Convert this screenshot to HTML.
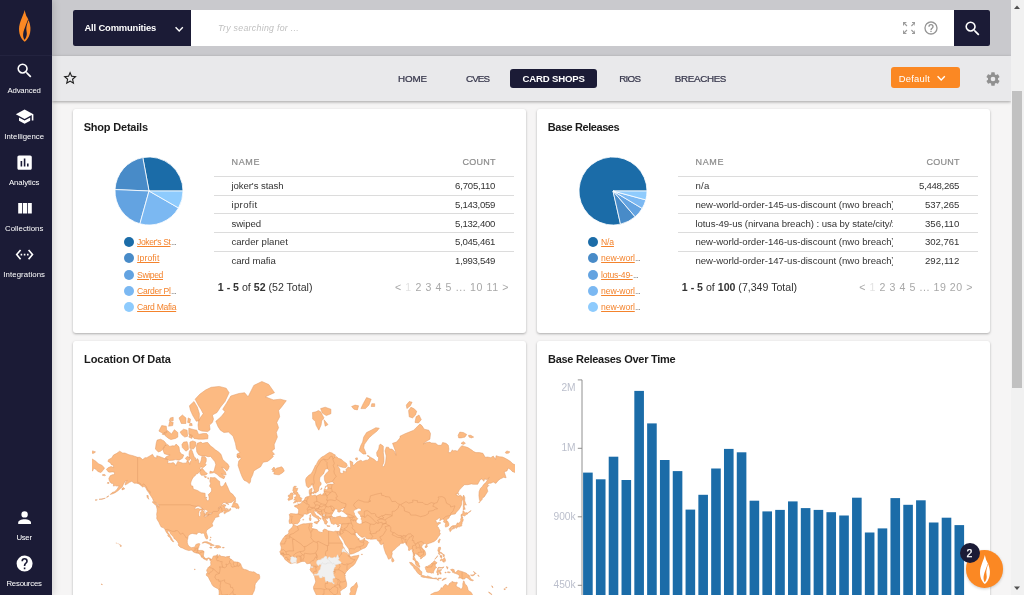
<!DOCTYPE html>
<html>
<head>
<meta charset="utf-8">
<style>
*{box-sizing:border-box;margin:0;padding:0}
html,body{width:1024px;height:595px;overflow:hidden;background:#f6f5f5;font-family:"Liberation Sans",sans-serif;}
.abs{position:absolute}
.t{position:absolute;white-space:nowrap}
#root{position:absolute;left:0;top:0;width:1024px;height:595px;overflow:hidden;will-change:transform;}
#side{position:absolute;left:0;top:0;width:52px;height:595px;background:#1b1b36;box-shadow:2px 0 7px rgba(0,0,0,.13)}
#topbar{position:absolute;left:52px;top:0;width:959px;height:56px;background:#c9c9cd}
#navbar{position:absolute;left:52px;top:55.6px;width:959px;height:45px;background:#e9e9eb;box-shadow:0 1px 3px rgba(0,0,0,.35)}
#search{position:absolute;left:73px;top:10px;width:917px;height:36px;background:#fff;border-radius:2px;overflow:hidden}
.card{position:absolute;background:#fff;border-radius:3px;box-shadow:0 1px 2.5px rgba(0,0,0,.3);width:453px;overflow:hidden}
.hl{position:absolute;height:1px;background:#dcdcdc}
</style>
</head>
<body>
<div id="root">
<div class="card" style="left:73px;top:109px;height:224px"></div>
<div class="card" style="left:537px;top:109px;height:224px"></div>
<div class="card" id="c3" style="left:73px;top:341px;height:300px"><svg class="abs" style="left:11px;top:30px" width="431" height="224" viewBox="84 371 431 224"><defs><clipPath id="mc"><rect x="92" y="371" width="423" height="224"/></clipPath><clipPath id="lc"><path d="M106.4 469.3L108.4 467.6L111.1 466.5L113.6 467.6L113.4 465.3L111.3 464.7L110.5 462.9L107.9 461.4L108.6 459.6L111.7 458.0L113.5 455.0L116.8 453.3L119.7 451.2L122.6 453.0L124.9 453.0L128.9 454.7L133.0 455.7L137.6 457.3L139.9 457.3L142.7 459.6L145.0 457.7L146.8 457.7L150.2 455.7L152.5 454.3L154.2 457.3L156.6 458.0L156.8 455.7L160.0 456.7L164.0 458.3L167.5 459.6L168.1 461.7L167.3 462.9L170.9 463.2L173.2 462.6L175.0 464.1L175.8 465.9L176.7 463.5L177.8 461.4L180.1 462.3L183.0 463.2L186.5 462.9L187.1 460.8L188.8 461.7L189.6 464.4L190.2 462.0L191.7 459.9L189.6 457.7L189.0 454.3L189.4 451.2L191.0 449.1L192.2 450.9L193.0 453.3L194.2 457.0L195.7 458.0L195.7 460.8L197.4 458.6L198.6 460.2L198.8 463.5L200.1 463.2L201.2 460.2L201.8 456.7L204.9 456.7L206.3 458.6L206.2 461.4L205.1 463.5L206.3 464.7L203.7 467.3L202.2 467.6L200.9 466.7L199.9 468.1L200.9 470.3L199.1 471.9L198.0 473.5L196.0 474.0L195.3 475.6L193.4 477.0L192.2 479.0L191.3 481.1L190.7 483.2L191.1 485.8L192.8 486.1L193.4 489.3L195.3 489.7L197.6 490.5L199.4 491.7L201.4 492.7L205.1 493.3L205.2 495.3L205.2 497.6L206.3 499.1L207.2 500.7L208.3 500.7L209.2 499.1L208.9 496.5L208.3 494.5L210.1 493.1L211.6 491.1L211.5 488.6L209.5 486.1L210.6 483.6L209.8 481.3L210.3 477.5L212.9 477.8L214.9 477.5L217.0 479.2L218.7 480.9L219.6 481.3L219.9 485.4L221.6 486.7L223.5 485.8L224.8 483.4L225.6 482.3L226.4 484.5L227.9 487.6L228.9 490.1L230.2 492.5L232.5 494.1L234.0 496.1L235.6 498.0L235.4 499.8L233.7 500.7L231.4 502.5L228.5 502.7L225.6 502.5L223.3 502.7L222.0 504.5L220.4 506.0L218.9 507.7L217.9 508.5L219.3 507.7L221.2 505.7L223.5 504.5L225.8 505.0L225.3 506.3L223.5 506.5L225.0 507.5L225.3 509.3L226.8 510.2L229.1 510.2L230.3 508.2L230.9 509.8L229.4 511.0L226.8 512.1L224.5 513.8L223.7 512.6L225.4 511.0L223.7 511.1L222.5 511.9L220.7 512.6L219.0 513.7L218.5 515.2L219.3 516.3L217.9 516.9L216.1 517.3L214.7 518.2L214.4 519.7L213.5 520.8L212.8 522.3L212.1 523.6L212.6 525.2L212.9 526.0L211.5 526.8L210.1 527.8L208.7 528.7L206.6 530.4L206.2 532.3L207.1 534.9L207.8 537.1L207.4 538.9L206.5 539.1L205.7 538.0L204.7 535.8L204.5 534.3L203.2 533.0L201.6 533.4L199.7 532.5L197.6 532.6L197.0 534.2L195.1 534.0L192.2 533.4L190.5 534.0L188.2 535.8L187.9 538.1L187.3 540.6L187.3 542.7L188.0 544.9L189.2 546.5L190.5 547.2L191.7 547.7L194.0 547.2L195.1 546.7L195.7 544.8L196.3 544.2L198.6 543.6L199.7 543.7L199.9 544.3L199.1 546.0L198.8 547.6L198.2 548.5L198.0 550.3L199.1 550.5L200.9 550.4L202.6 550.5L204.1 551.5L203.7 553.8L203.5 555.5L203.6 556.3L204.3 557.3L205.2 558.3L206.6 558.6L207.9 558.0L208.9 557.8L210.3 558.6L210.9 558.9L210.2 560.4L209.6 559.2L208.3 558.5L207.4 559.3L207.2 560.4L206.0 560.0L204.8 559.3L203.6 559.0L203.2 558.0L202.0 557.5L201.1 556.9L201.2 556.0L199.7 554.4L198.9 553.6L197.4 553.3L195.8 552.9L194.4 552.5L193.5 551.9L191.7 550.2L190.5 550.2L188.8 550.6L187.1 550.1L184.9 549.3L182.4 548.0L180.6 547.4L179.0 546.1L178.2 545.0L178.6 543.7L177.4 541.6L175.5 539.4L173.9 538.4L173.8 537.2L172.1 535.6L170.4 533.7L169.8 531.7L167.7 530.6L167.8 532.3L169.2 534.3L170.4 536.2L171.5 537.9L172.5 540.0L173.8 541.6L173.1 542.0L171.4 540.3L170.7 539.4L170.6 537.9L169.2 537.1L167.7 535.8L168.4 534.9L166.6 532.7L165.5 530.8L165.0 529.6L163.6 527.8L161.2 527.0L159.7 524.2L158.9 522.3L157.4 519.9L156.7 518.5L156.9 516.1L156.6 514.6L157.1 511.4L157.1 509.3L156.3 505.8L158.3 506.2L158.9 507.5L158.6 504.8L157.9 504.1L156.2 502.7L153.7 501.3L152.5 498.5L150.7 495.7L149.6 494.1L148.7 492.5L147.1 490.5L145.6 487.6L143.9 486.3L142.7 487.2L141.0 485.4L138.9 483.9L136.4 483.2L134.1 483.2L131.8 481.3L129.5 482.3L127.8 483.6L125.1 485.0L125.7 482.0L127.2 480.4L125.4 480.9L124.3 482.7L123.2 484.7L122.4 486.7L120.3 488.6L118.0 490.7L115.1 492.7L112.8 493.7L110.2 494.5L112.2 492.5L114.5 491.7L116.8 489.7L118.5 486.9L119.1 485.8L116.8 486.1L115.1 485.6L113.4 486.1L113.4 483.6L111.1 483.2L109.4 480.9L108.8 478.5L110.2 475.8L112.2 474.8L114.5 474.5L114.5 472.2L112.2 471.9L109.5 472.2L108.1 471.7L106.4 469.3ZM223.9 478.7L225.0 476.5L223.3 475.6L221.6 474.0L224.5 474.8L226.2 474.8L225.3 471.9L223.3 469.5L221.8 467.0L224.5 468.4L226.8 471.1L228.5 468.7L229.2 466.5L227.9 464.1L225.6 462.3L222.7 459.3L221.6 456.0L220.8 454.0L218.1 451.6L215.3 449.8L212.9 447.6L210.6 446.1L207.8 442.5L206.0 442.5L202.6 443.3L200.9 442.1L197.2 443.3L196.3 447.2L196.8 451.9L198.6 454.7L200.3 455.4L202.0 456.0L205.5 456.0L208.3 456.7L210.6 456.4L212.9 459.3L214.9 461.7L215.8 464.7L214.9 467.6L214.3 470.3L212.9 471.9L210.1 471.1L209.7 473.3L212.4 473.0L214.1 472.5L217.0 474.3L219.3 476.5L221.6 477.8L223.9 478.7ZM179.0 460.2L182.4 458.3L183.8 455.0L181.3 454.0L179.6 451.6L179.0 446.8L176.1 444.1L174.4 446.1L172.7 445.7L169.8 446.4L167.5 444.5L164.6 445.7L162.9 450.1L164.3 453.7L167.5 454.7L170.1 455.0L165.8 457.0L165.0 459.3L166.9 458.9L169.0 460.5L173.2 460.2L175.5 459.6L179.0 460.2ZM158.3 451.9L155.4 449.1L156.2 443.3L157.1 440.1L160.6 439.2L164.0 440.9L166.6 444.1L164.6 446.4L162.3 449.8L160.6 451.2L158.3 451.9ZM177.8 437.1L175.5 438.4L170.9 439.6L168.6 438.4L165.2 435.7L164.6 432.5L167.5 430.6L171.5 433.9L174.4 429.7L177.8 432.5L177.8 437.1ZM185.9 451.2L182.4 447.6L181.9 444.5L183.6 442.1L187.1 441.7L188.2 445.7L188.4 449.4L185.9 451.2ZM189.8 448.3L189.9 442.1L192.8 440.9L195.7 442.1L195.9 445.7L193.4 449.1L189.8 448.3ZM185.3 458.6L187.1 456.4L189.4 457.3L189.9 459.9L187.6 460.8L185.3 458.6ZM207.8 438.8L208.0 435.3L206.6 433.5L203.2 433.5L198.6 434.4L196.8 430.2L194.0 429.7L188.8 428.2L188.8 434.4L192.8 437.1L194.0 438.4L198.6 439.2L203.2 439.2L207.8 438.8ZM187.6 436.2L184.8 437.1L181.9 434.8L180.1 432.1L183.6 429.2L187.1 430.2L187.6 436.2ZM166.9 432.5L162.9 433.5L158.9 431.1L161.7 425.6L166.3 426.2L166.9 432.5ZM185.9 423.5L181.3 423.5L179.0 417.9L182.4 415.0L185.9 417.9L185.9 423.5ZM207.8 431.6L210.1 429.7L209.5 425.1L212.4 422.4L213.5 419.1L212.4 415.0L217.0 412.5L220.4 407.2L225.0 401.5L229.1 392.7L226.2 388.2L219.3 386.4L211.2 387.3L205.5 390.0L199.7 394.3L195.1 399.2L198.6 405.8L200.9 409.2L203.2 413.7L200.9 416.8L198.6 420.8L198.0 425.1L198.6 429.7L202.0 431.1L207.8 431.6ZM199.1 420.8L196.3 421.3L192.8 415.6L190.5 410.5L189.4 405.8L194.0 401.5L197.4 407.2L199.4 413.7L199.1 420.8ZM199.7 473.0L201.4 475.3L204.3 475.3L206.6 474.5L207.4 473.5L205.7 472.5L203.7 470.1L202.0 468.1L200.9 469.5L199.7 473.0ZM231.6 507.0L232.3 505.7L233.1 503.4L234.2 501.3L235.6 500.2L235.6 501.8L234.7 503.1L236.0 503.2L237.7 503.9L238.3 505.5L239.2 507.2L238.6 508.8L237.7 508.2L236.0 508.4L235.4 507.2L231.6 507.0ZM157.8 505.8L155.4 505.0L152.2 502.0L153.1 501.5L155.6 502.7L157.5 504.6L157.8 505.8ZM148.8 499.3L147.3 497.6L146.8 495.5L148.1 495.5L148.3 497.6L148.8 499.3ZM124.7 488.9L122.0 489.9L122.0 488.2L123.7 487.6L124.7 488.9ZM102.1 475.0L104.2 475.8L105.6 475.3L104.2 474.3L102.1 475.0ZM107.2 483.2L108.8 483.6L109.1 482.5L107.6 482.5ZM225.6 503.2L228.5 504.6L228.8 504.1L226.8 503.2ZM225.7 508.7L227.3 509.7L228.5 509.2L226.4 508.4ZM249.3 483.6L246.9 481.6L244.0 480.2L242.3 477.3L240.6 473.0L239.4 469.5L238.0 465.3L238.8 460.8L241.1 458.6L240.0 457.3L237.0 457.0L237.0 454.0L240.0 452.6L236.5 449.1L235.4 443.3L233.1 436.2L228.5 432.1L223.9 432.5L220.4 430.2L218.1 426.7L215.8 421.3L221.0 416.8L225.0 411.8L222.7 409.2L226.2 403.7L230.8 396.0L238.8 393.5L244.6 392.7L248.1 396.8L253.8 385.4L261.9 381.5L268.8 384.5L274.5 392.7L265.3 396.8L273.4 399.9L280.3 399.2L286.3 400.7L281.4 407.2L278.6 410.5L279.7 416.8L276.8 422.4L278.6 427.7L276.3 432.5L277.4 437.1L275.9 440.5L274.2 444.5L274.5 449.1L271.7 450.9L274.5 454.3L272.2 455.4L273.4 456.4L270.5 459.3L267.6 461.4L263.0 462.3L260.7 466.7L257.3 468.7L253.8 470.9L252.7 474.8L250.9 478.5L250.4 482.0L249.3 483.6ZM271.7 469.5L274.0 467.0L275.3 469.3L276.8 468.1L279.1 467.6L281.4 466.7L283.0 468.1L284.3 470.9L282.6 472.7L279.1 474.8L276.3 474.5L273.7 474.0L274.5 472.2L272.2 471.1L274.3 470.1L271.7 469.5ZM210.9 558.9L211.5 559.6L212.7 557.8L212.9 556.6L213.8 556.0L215.8 555.7L217.6 554.5L217.9 555.2L217.1 555.9L217.6 556.3L218.1 557.8L217.2 558.1L217.6 556.5L219.0 555.7L219.3 554.7L219.9 555.5L221.2 556.3L223.9 556.6L225.6 557.0L227.3 556.5L228.5 556.5L227.8 557.3L229.6 557.8L230.2 559.0L231.9 559.6L233.1 560.9L234.2 561.8L236.5 562.0L237.7 562.1L239.4 562.8L240.6 563.7L241.6 566.4L242.3 567.5L242.1 568.6L243.8 569.0L244.6 569.4L246.3 569.8L248.5 570.7L248.9 571.6L250.4 571.4L252.1 571.9L253.8 571.8L255.5 572.8L257.0 574.1L259.2 574.5L259.8 576.8L259.6 578.7L257.8 580.6L256.9 581.8L255.5 583.5L255.0 585.3L255.0 587.6L254.6 589.4L254.0 591.4L253.2 592.7L252.7 594.2L251.5 595.4L248.6 595.7L246.3 596.9L244.0 598.9L243.9 601.7L218.4 601.7L218.7 597.9L218.9 595.4L219.2 593.0L218.9 589.9L217.6 588.6L215.3 587.4L213.3 586.2L212.0 584.6L211.0 582.3L209.7 580.0L208.6 577.7L207.8 576.4L206.4 575.5L206.3 574.0L207.4 572.5L207.9 571.5L206.7 571.3L206.8 569.8L207.7 568.6L207.8 567.7L209.0 567.2L209.2 566.6L210.6 565.7L210.9 564.3L210.6 562.4L210.9 561.2L210.2 560.4L210.9 558.9ZM202.1 543.2L203.2 542.1L204.9 541.7L207.2 541.7L208.9 542.6L210.6 543.3L212.7 544.6L214.4 545.3L213.5 545.6L210.4 545.8L211.0 544.8L209.5 544.3L207.8 543.5L206.0 542.8L204.9 542.4L203.2 543.1L202.1 543.2ZM214.2 547.4L216.2 547.2L216.1 546.4L215.4 545.8L217.0 545.6L219.3 545.8L221.1 547.2L219.9 547.6L218.1 547.9L217.4 548.3L216.4 547.8L214.2 547.4ZM209.7 547.4L211.2 547.3L212.1 547.9L211.0 548.2L209.7 547.7ZM222.5 547.4L224.2 547.4L224.1 547.9L222.5 547.9ZM228.7 556.5L229.6 556.3L229.6 557.1L228.7 557.1ZM209.7 539.8L210.4 539.3L210.5 540.3L209.8 540.4ZM210.6 537.1L211.2 537.5L211.0 537.9L210.2 537.4ZM293.1 525.2L293.7 525.0L296.4 525.9L297.5 526.1L299.2 525.3L301.6 524.3L303.3 523.8L305.6 523.8L307.9 523.5L310.2 523.2L311.2 523.1L312.5 523.5L311.9 524.9L312.4 526.3L311.4 527.7L312.5 528.6L315.0 529.1L317.3 529.8L318.3 531.4L320.6 532.2L322.1 532.6L322.9 531.7L322.9 530.2L324.6 529.1L326.3 529.6L327.5 530.4L328.6 530.9L330.9 531.3L333.2 531.8L334.4 531.4L335.5 531.0L337.0 531.4L337.3 533.0L337.5 534.3L338.5 536.0L339.2 537.9L340.1 539.6L340.9 540.8L342.2 543.0L342.7 544.3L342.7 546.0L344.2 547.9L345.0 549.9L345.7 551.1L347.0 552.0L348.8 553.8L349.7 554.4L349.6 555.5L350.5 556.7L351.6 556.8L353.9 556.0L356.2 555.8L358.9 555.2L358.6 556.8L357.4 559.0L356.2 561.3L355.1 563.5L353.4 565.5L352.0 566.4L349.9 568.1L348.2 569.8L347.0 570.9L346.1 572.0L345.5 573.2L344.7 574.9L345.1 576.4L345.3 578.3L345.9 580.4L346.6 582.9L346.7 585.3L346.2 587.0L344.7 588.2L342.4 589.4L340.0 591.5L340.4 593.6L340.7 596.0L337.8 598.5L337.8 601.7L317.1 601.7L316.9 597.9L316.5 595.3L315.4 593.0L313.7 589.4L313.4 587.0L313.8 586.1L315.3 583.0L315.7 581.2L315.0 578.7L314.6 576.6L313.9 575.5L313.7 574.3L313.4 574.1L312.5 572.8L311.0 571.5L310.2 569.8L309.9 569.4L310.7 568.2L310.9 567.0L311.1 565.8L311.0 564.7L310.8 564.1L310.0 563.5L309.4 563.4L307.9 563.7L306.8 563.8L305.8 562.4L304.9 561.5L303.8 561.4L302.2 561.5L301.2 561.7L299.9 562.3L297.5 563.2L295.8 562.9L295.2 562.6L292.9 563.1L291.2 563.7L289.5 563.0L287.4 561.5L286.6 560.8L285.5 560.1L284.7 559.0L284.3 557.8L282.9 556.5L282.6 555.9L281.9 555.1L280.6 554.4L280.5 553.3L279.7 551.8L280.9 550.3L281.3 547.8L280.9 546.1L280.3 544.3L280.4 543.1L281.4 541.0L282.7 539.0L283.2 538.0L284.3 537.0L285.0 535.7L287.2 534.6L288.3 533.7L288.8 532.5L288.6 531.0L289.3 530.0L291.1 528.2L292.0 527.7L292.7 526.3L293.1 525.2ZM356.6 582.3L357.7 586.4L356.8 588.8L356.2 591.2L355.1 594.8L353.9 597.9L351.6 598.5L350.1 596.0L349.7 593.6L350.8 591.8L350.5 588.8L351.6 587.0L353.9 585.8L355.1 584.1L356.6 582.3ZM289.5 523.5L289.0 521.0L289.7 518.4L289.7 516.1L289.1 514.6L290.6 513.5L293.5 513.8L295.8 514.0L297.8 514.0L298.5 512.2L298.6 510.6L298.5 509.5L297.5 508.2L296.6 507.4L294.7 506.7L294.4 505.8L296.4 505.1L298.0 505.5L297.8 503.6L298.5 504.1L300.0 503.9L301.6 502.9L301.9 501.5L303.5 500.7L304.5 499.5L305.3 497.6L306.8 496.8L307.9 496.5L309.6 496.1L309.9 495.1L309.4 493.9L309.2 492.7L309.2 490.7L309.7 489.5L312.1 488.2L311.8 490.7L311.4 492.7L310.9 493.9L311.4 494.9L312.5 495.7L313.9 495.3L315.4 494.9L316.3 495.9L318.3 495.1L320.6 494.1L321.5 494.9L322.6 494.9L322.9 493.9L324.0 492.7L324.0 490.1L324.7 488.4L326.3 489.7L327.7 489.3L327.9 486.9L326.9 485.8L326.9 485.0L328.4 484.3L330.4 484.1L332.1 484.3L334.6 483.4L333.2 482.7L332.7 481.8L330.9 482.0L328.6 482.7L326.3 483.4L325.2 482.0L324.4 479.7L324.3 476.1L325.7 474.0L328.0 471.4L329.1 470.9L327.7 468.7L325.4 469.0L324.4 471.7L323.4 474.0L321.1 476.1L319.8 477.8L319.6 480.9L319.8 481.8L321.1 482.7L321.1 484.7L319.4 486.3L318.8 488.6L318.5 490.7L318.0 491.5L316.5 491.7L316.2 492.9L314.8 492.9L314.5 491.3L313.7 488.6L313.5 488.2L312.7 485.4L312.2 483.4L311.7 485.0L310.4 486.1L309.1 487.4L307.9 487.6L306.4 485.8L305.8 482.3L305.6 479.7L306.2 478.0L307.3 476.8L309.1 475.0L311.0 474.0L312.5 471.4L314.2 468.1L315.4 465.3L316.4 464.4L317.7 461.7L318.8 459.9L321.7 457.0L324.0 456.0L326.3 454.3L329.5 452.3L332.1 453.0L333.8 454.3L335.5 455.0L334.4 456.7L336.7 456.7L338.4 458.3L341.3 459.3L343.6 461.4L346.5 463.5L347.3 465.9L345.9 467.6L343.6 467.6L340.1 466.7L337.3 465.0L338.4 466.7L339.9 469.5L339.9 472.5L341.9 473.5L343.6 472.7L343.0 470.9L346.5 471.9L345.9 469.5L348.2 467.0L350.7 468.1L350.5 465.3L349.9 460.8L352.8 462.3L352.8 465.3L353.9 465.3L355.7 463.2L357.4 461.7L360.9 460.2L362.6 461.4L366.0 460.2L367.8 460.2L369.5 458.3L369.5 456.7L374.1 459.3L376.4 461.4L378.1 461.4L378.7 457.7L377.0 456.0L376.6 452.6L378.7 449.1L379.3 445.3L380.4 444.1L383.3 446.1L383.3 452.6L383.9 457.7L383.9 462.3L382.1 466.2L383.9 466.7L385.6 462.3L386.2 456.0L385.0 450.9L386.2 447.2L388.5 447.2L389.6 449.1L391.9 449.1L394.2 450.9L396.0 455.4L395.4 450.9L392.5 443.3L396.5 442.1L400.0 437.9L400.0 436.2L404.6 433.9L409.2 432.1L413.8 430.2L416.1 427.7L419.9 424.1L421.9 425.6L424.2 429.2L428.8 430.2L430.5 433.5L429.9 439.2L426.5 441.3L423.0 444.1L426.5 442.5L429.9 442.1L431.1 442.9L435.7 443.3L438.0 445.3L441.4 445.3L442.6 442.5L446.0 443.3L448.3 445.3L448.9 449.1L448.3 452.6L450.6 452.6L452.4 449.8L452.9 450.9L455.2 450.5L457.5 451.2L459.8 447.9L461.8 445.7L464.4 446.4L467.9 447.6L472.5 450.5L473.7 451.6L476.0 452.6L479.4 452.6L482.9 453.3L485.2 457.3L487.5 457.0L490.9 457.7L493.2 456.0L495.5 459.3L496.1 455.7L499.0 456.7L502.4 457.0L504.7 458.0L507.0 459.3L510.5 461.4L512.8 463.8L516.2 465.3L518.9 467.9L518.0 469.5L515.7 472.2L514.9 472.5L512.2 471.4L510.5 469.5L508.2 468.1L507.0 470.9L504.2 471.7L506.1 477.8L503.6 477.3L500.1 479.0L497.8 480.9L495.9 483.4L493.2 482.0L490.9 483.2L489.8 483.2L488.0 483.6L487.5 486.5L486.9 488.0L487.8 491.3L486.3 493.7L484.0 497.2L482.5 497.6L482.1 499.5L480.2 501.5L479.4 499.5L478.9 495.7L479.1 491.7L480.3 488.6L482.3 486.5L483.8 484.3L486.1 482.3L488.0 479.0L489.2 477.5L486.9 479.5L484.4 479.0L484.0 481.3L481.7 479.0L480.2 479.7L478.3 483.2L477.7 484.3L473.4 484.3L471.3 483.9L467.9 484.7L464.4 484.7L461.6 487.6L459.3 490.1L457.5 493.7L455.8 494.3L458.1 496.1L460.4 495.3L462.5 497.0L462.1 497.6L462.6 499.1L461.8 501.3L461.5 504.8L459.8 508.2L458.7 509.8L456.4 512.2L455.2 514.0L451.8 514.4L450.6 515.2L450.3 515.7L449.2 516.9L449.1 517.9L447.2 519.1L446.6 519.9L446.6 520.3L447.6 521.3L448.8 523.5L448.9 524.9L448.4 526.1L447.2 526.6L445.5 527.1L445.2 525.6L445.6 523.5L445.6 522.8L444.3 522.5L443.5 521.9L444.1 519.9L443.0 519.1L441.4 519.7L439.7 520.8L440.3 518.4L439.1 517.8L437.5 519.3L435.4 520.6L436.6 522.1L436.8 523.2L438.9 522.3L440.8 522.9L439.1 524.0L438.3 524.7L437.0 526.3L438.3 527.2L439.0 529.0L440.0 530.6L440.0 531.4L439.1 532.2L440.3 533.0L439.8 534.9L438.5 536.6L437.5 538.1L436.6 539.4L435.8 540.0L434.5 541.3L434.2 541.5L432.2 542.2L431.3 542.7L429.9 543.1L428.2 543.7L427.0 544.1L426.8 545.2L426.2 544.3L425.3 543.6L424.7 543.6L424.2 543.7L422.8 544.6L421.9 546.1L421.6 547.0L422.4 548.2L423.6 549.5L424.5 550.3L425.3 552.0L425.7 553.8L425.5 555.2L424.2 556.3L423.0 556.8L422.4 557.7L421.1 558.8L420.5 558.9L420.7 557.3L420.1 556.8L419.0 556.6L418.4 555.8L417.6 554.7L416.1 554.1L415.5 553.2L415.0 553.8L415.0 555.0L414.4 556.1L414.0 556.7L414.7 558.1L415.3 559.0L415.5 560.5L416.7 560.9L417.5 561.6L418.9 563.5L418.9 564.7L419.6 565.8L419.9 567.1L419.3 567.2L418.7 566.8L417.5 566.2L416.4 565.3L415.6 563.9L415.3 562.5L415.2 561.4L414.6 560.7L413.8 559.9L413.0 559.7L413.0 558.4L413.2 557.3L413.3 555.5L413.3 554.4L412.9 552.6L412.3 550.9L412.2 549.7L411.3 549.1L410.6 549.6L409.5 550.5L408.4 550.3L408.6 548.5L408.3 547.0L407.5 545.8L406.8 545.4L406.1 544.3L405.5 542.7L404.6 542.5L404.0 543.1L402.9 543.3L401.7 543.5L401.1 543.3L400.0 543.7L399.8 544.9L398.6 545.8L397.7 546.5L396.5 547.6L395.7 548.3L394.6 549.6L393.3 550.4L392.3 550.9L392.0 552.6L392.3 553.7L391.8 555.2L391.7 556.9L391.0 558.1L389.9 558.5L389.1 559.4L388.4 559.0L387.6 557.3L387.1 555.8L385.9 553.9L384.8 550.9L384.2 549.1L383.6 546.7L383.5 544.9L383.6 544.3L383.4 542.8L382.8 544.1L381.6 544.7L380.4 544.3L380.0 543.6L379.3 542.7L380.8 542.0L379.3 542.1L378.7 541.5L378.3 541.0L377.4 540.6L377.0 539.6L376.4 538.9L374.1 539.1L371.6 539.3L370.6 539.3L369.6 539.0L367.8 538.9L366.4 538.5L365.5 537.1L364.7 536.6L363.2 537.2L362.0 537.4L360.3 536.2L358.3 534.4L357.6 533.0L356.2 532.5L355.8 533.1L355.1 533.8L355.7 534.9L356.2 536.2L357.4 537.2L357.6 538.6L358.3 539.6L358.3 538.8L358.8 538.0L359.2 539.0L359.0 539.9L360.3 540.4L362.5 540.0L363.5 539.0L364.4 538.0L364.8 537.8L364.8 539.4L365.2 540.4L367.3 541.1L368.7 542.5L367.8 543.8L367.2 545.0L366.4 546.7L364.9 547.9L363.5 548.4L362.0 549.1L359.9 550.3L358.6 551.2L356.2 552.2L354.5 553.1L351.6 554.0L349.9 554.1L349.6 553.2L349.2 551.5L348.9 549.7L348.8 549.2L347.3 547.0L345.9 545.2L344.9 543.7L344.2 541.9L343.6 540.5L342.4 538.8L341.9 537.9L340.7 536.2L339.9 535.5L340.1 533.7L339.3 535.8L338.4 535.1L337.4 533.1L337.0 531.3L339.2 531.3L339.9 530.2L340.1 529.3L340.7 527.8L341.1 525.6L341.5 524.0L340.7 524.0L339.7 523.8L338.4 524.7L337.6 524.9L335.2 523.6L333.8 524.6L332.4 523.8L331.4 523.5L330.7 521.5L330.1 520.2L330.0 519.1L331.5 518.5L333.2 518.5L334.3 518.1L333.2 517.6L333.3 517.3L335.8 517.5L336.5 516.9L340.4 516.1L341.6 517.2L345.5 517.6L347.7 516.7L347.8 515.8L347.0 514.6L345.5 513.7L343.4 511.9L342.0 511.1L342.8 511.0L343.6 509.8L343.9 508.7L345.1 507.9L343.6 508.0L343.0 508.0L342.2 508.7L340.5 509.3L340.1 510.3L341.9 510.8L340.6 511.4L339.2 512.2L338.3 512.1L337.3 511.0L338.5 509.8L337.3 509.7L336.1 508.8L335.2 509.0L334.0 511.0L332.9 512.7L332.0 514.3L331.5 515.4L332.1 516.3L333.2 517.2L333.1 517.6L331.5 517.6L330.6 518.5L330.0 519.0L329.8 518.2L329.7 517.9L327.9 517.8L327.5 519.1L326.9 518.8L326.2 518.2L325.9 519.1L326.3 520.2L327.5 521.8L327.1 522.2L327.5 522.5L326.6 522.9L326.6 524.2L325.7 524.2L324.8 523.8L324.4 522.5L324.8 521.8L324.0 521.6L323.7 520.8L322.9 519.6L322.2 518.5L322.2 517.2L321.9 516.3L321.1 515.5L320.7 515.2L318.7 513.8L317.3 512.9L316.4 511.0L315.5 511.6L315.7 510.5L314.0 510.8L314.2 511.6L314.4 512.9L315.4 513.7L316.2 515.4L318.5 516.3L319.3 517.5L320.6 518.2L321.1 519.0L321.0 519.4L319.6 518.4L319.0 519.0L318.8 519.6L319.5 520.5L319.0 520.9L318.4 522.2L317.8 521.9L318.0 521.0L318.4 520.6L317.8 519.1L316.9 518.1L316.2 517.9L315.4 517.3L313.9 516.6L312.5 515.5L311.9 514.6L311.7 513.8L311.1 512.9L310.1 512.4L309.3 513.0L308.3 513.5L306.8 514.4L306.1 514.1L305.1 514.0L303.9 514.1L303.3 515.4L303.6 515.7L302.4 517.0L301.2 517.5L300.8 518.1L299.5 519.9L300.1 521.0L299.3 521.6L298.8 522.6L297.3 523.9L297.0 523.8L294.8 523.9L293.6 524.7L293.4 524.9L292.6 524.2L291.8 523.2L290.6 523.5L289.5 523.5ZM293.3 502.9L294.1 502.3L294.7 501.3L296.4 500.7L296.4 500.4L295.0 500.2L293.7 499.8L295.0 498.7L294.7 497.8L294.6 497.0L296.2 496.8L296.4 495.7L295.8 494.7L296.1 493.9L294.3 494.3L294.0 493.9L294.3 492.7L294.3 491.9L293.3 493.1L293.4 491.3L292.7 490.3L293.2 489.1L293.2 487.8L294.1 486.3L296.4 486.3L295.2 487.8L295.0 488.6L296.1 488.2L297.5 488.2L297.8 488.6L297.4 489.5L297.0 490.7L296.2 491.7L297.5 492.1L298.2 493.7L299.3 494.9L299.7 495.5L299.7 496.5L300.2 497.4L300.1 497.8L301.3 497.8L301.9 498.5L301.3 499.6L300.7 500.4L301.5 500.6L301.5 501.1L301.0 501.5L300.1 501.8L298.6 501.6L297.5 502.0L297.1 502.2L296.4 501.8L295.8 502.3L295.7 502.7L295.1 502.5L293.9 503.1L293.3 502.9ZM292.5 499.1L292.8 497.0L292.7 495.7L293.4 494.5L292.9 493.3L291.3 492.9L290.3 493.5L290.1 494.7L288.3 495.3L288.3 496.6L289.5 497.2L288.5 498.3L287.9 499.3L288.1 499.8L288.6 500.6L290.3 499.8L291.8 499.3L292.5 499.1ZM318.8 430.2L316.0 425.1L315.4 421.3L312.7 419.1L312.5 412.5L316.0 411.8L318.3 410.5L320.6 411.8L324.0 417.9L321.7 420.8L321.1 425.1L318.8 430.2ZM320.6 408.6L325.2 407.2L330.9 409.2L330.9 413.7L326.3 415.6L322.3 413.1L320.6 408.6ZM324.0 419.7L328.0 424.6L325.2 426.2L324.0 419.7ZM351.6 406.5L355.1 405.1L358.6 405.8L357.4 409.9L353.9 409.2ZM360.9 408.6L365.5 408.6L368.9 405.1L371.2 399.2L366.6 397.6L363.2 403.7ZM371.2 406.5L374.7 406.5L374.7 403.7L371.8 403.7ZM359.1 450.5L360.9 445.3L362.6 442.1L363.7 437.1L366.6 432.5L371.2 430.2L375.8 427.7L379.3 428.2L377.0 431.1L372.4 434.8L368.9 437.9L366.0 442.1L364.3 444.5L363.7 447.9L365.5 451.9L366.0 454.0L363.2 454.0L361.4 452.6L359.1 450.5ZM355.4 458.3L357.2 457.7L357.7 459.3L356.2 460.2ZM367.2 455.4L369.3 456.0L368.3 457.0ZM409.2 416.8L412.6 417.9L415.5 415.0L416.7 411.2L413.8 408.6L410.9 407.2L408.6 410.5L409.2 416.8ZM415.0 422.4L418.4 423.0L421.3 419.7L419.0 415.0L416.1 416.8L415.0 422.4ZM406.9 408.6L410.3 405.8L412.1 402.2L409.2 401.5L406.3 405.1ZM458.1 435.3L459.8 432.1L463.3 432.5L466.7 434.4L465.0 437.1L461.0 437.9L458.7 437.9ZM468.5 435.3L470.8 435.3L473.7 437.1L471.3 437.9L469.0 437.1ZM461.0 443.3L463.3 441.7L465.4 443.3L463.3 444.5ZM505.3 452.3L507.0 450.9L509.9 451.9L508.2 453.3L505.9 453.3ZM463.6 495.1L464.8 497.6L464.7 500.4L465.4 503.1L466.4 505.1L464.4 504.5L464.2 506.5L465.0 508.5L464.9 509.7L463.9 508.7L463.3 510.0L463.3 507.4L463.3 504.8L463.4 502.2L463.1 500.0L462.9 497.0L463.6 495.1ZM461.1 517.0L461.3 515.7L460.8 515.2L461.6 514.1L462.5 514.3L462.9 512.2L462.9 510.8L463.3 510.6L464.4 512.2L465.9 513.0L467.1 512.6L467.7 514.0L466.1 514.6L464.7 516.1L462.8 515.2L462.1 515.7L461.5 515.4L461.8 516.1L462.4 516.4L461.8 516.6L461.1 517.0ZM462.0 516.9L462.7 517.0L462.7 518.4L463.3 519.7L462.8 521.6L462.1 521.8L462.1 523.5L461.7 524.5L461.9 525.3L461.0 526.4L460.8 525.6L460.6 526.1L459.7 526.8L458.9 526.8L457.5 526.8L457.3 526.3L457.4 527.2L456.2 528.5L455.4 527.4L455.6 526.8L454.1 526.8L452.2 527.2L450.6 527.7L450.6 527.1L452.6 525.7L454.3 525.6L456.2 525.4L456.4 524.6L457.2 523.1L457.9 522.8L457.8 523.8L459.8 522.2L460.8 520.9L460.6 519.3L461.0 518.2L461.3 517.3L461.9 517.8L462.0 516.9ZM451.8 528.6L452.6 527.8L454.1 527.2L454.8 527.4L454.3 528.7L453.5 528.3L452.9 529.4L452.4 528.7L451.8 528.6ZM450.5 527.8L451.4 528.7L451.8 529.3L451.2 530.5L450.3 531.7L449.8 531.3L449.7 530.1L449.2 529.6L449.1 528.7L449.9 528.2L450.5 527.8ZM439.7 539.0L440.3 539.4L439.8 540.6L439.0 543.1L438.2 542.1L438.1 541.0L439.1 539.4L439.7 539.0ZM425.0 546.4L426.0 545.5L427.0 545.4L427.6 546.0L427.0 547.0L426.0 547.7L425.0 547.3L425.0 546.4ZM392.2 557.5L393.3 559.0L394.0 560.4L393.8 561.3L392.6 561.9L391.9 561.6L391.7 560.7L391.7 559.3L392.0 558.0L392.2 557.5ZM438.7 547.3L440.5 547.3L440.6 549.1L439.8 550.3L439.8 551.7L440.6 552.6L441.8 552.7L442.6 553.8L442.7 554.3L441.8 553.8L441.0 553.4L439.9 552.7L439.1 553.0L438.7 552.4L439.0 551.9L438.3 551.7L437.9 550.5L437.7 549.9L438.3 550.2L438.3 548.5L438.7 547.3ZM444.3 557.5L445.2 559.0L445.6 560.4L445.1 561.5L444.4 560.7L444.2 562.3L442.8 561.7L442.6 560.7L441.9 560.2L440.3 560.8L440.4 559.8L441.2 559.2L441.8 558.9L442.3 559.4L442.8 559.3L443.3 559.0L443.7 558.4L444.3 557.5ZM442.9 554.4L444.1 554.4L444.5 555.9L443.7 557.0L443.4 556.2L443.0 555.5ZM440.7 556.7L441.7 556.1L442.0 556.7L441.5 558.3L440.8 557.5ZM440.2 555.2L441.5 555.5L441.1 556.6L440.2 556.7ZM438.3 553.3L439.4 553.3L439.7 554.4L439.2 554.7L438.8 554.0ZM434.7 559.1L435.7 558.2L436.8 556.9L437.5 555.7L437.2 556.8L436.1 558.2L435.2 559.0ZM426.0 566.3L427.0 566.7L428.0 565.9L429.9 565.0L431.1 563.7L432.2 563.0L433.4 561.8L434.3 560.7L435.3 561.4L435.8 562.0L437.0 562.6L436.4 563.7L435.6 563.9L435.2 564.9L435.4 566.4L436.8 567.5L435.6 567.7L434.9 569.2L434.3 570.1L433.7 571.5L433.4 572.7L433.4 573.2L431.8 572.6L431.6 573.3L429.9 572.4L428.5 572.6L426.7 572.0L426.5 570.8L425.7 569.4L425.5 568.6L425.2 567.5L426.0 566.3ZM409.5 562.3L412.1 562.8L413.0 563.8L413.5 564.3L415.3 565.8L416.7 566.7L418.2 567.7L419.3 568.6L419.0 569.8L420.0 569.8L420.5 570.9L421.9 571.8L421.9 572.4L421.7 573.8L421.6 575.2L421.1 575.3L420.1 574.9L418.4 573.8L417.6 573.0L415.4 569.8L413.8 568.3L413.6 566.7L412.1 565.8L410.9 564.5L410.5 564.0L409.5 562.3ZM420.9 576.4L421.9 575.3L422.8 575.6L424.5 575.8L424.8 576.3L426.9 576.5L427.6 575.9L429.6 576.8L431.5 577.4L431.5 578.0L431.6 578.5L429.6 578.2L427.6 578.0L425.3 577.4L423.8 577.4L422.3 577.1L420.9 576.4ZM431.6 577.9L433.0 578.0L432.4 578.7ZM433.4 578.1L434.2 578.1L433.9 578.8L433.4 578.7ZM434.3 578.2L435.7 577.9L437.0 578.2L436.2 578.8L434.5 578.9ZM437.7 578.2L439.1 578.1L441.4 578.0L441.2 578.4L439.1 578.8L437.9 578.7ZM436.8 579.3L438.3 579.5L438.9 580.2L437.4 580.0ZM442.0 580.4L443.1 579.1L444.3 578.4L446.4 578.2L445.5 578.9L443.7 579.8L442.6 580.4ZM444.0 566.8L442.9 568.2L441.4 568.1L439.7 568.1L438.2 568.1L438.0 569.7L438.9 570.2L439.8 569.7L441.9 569.7L440.8 570.5L439.8 570.9L440.2 571.8L440.8 572.3L441.0 573.2L441.2 574.1L439.8 574.1L439.7 573.2L439.0 571.7L438.4 571.8L438.2 572.0L438.4 573.8L438.4 574.9L437.4 575.0L437.4 573.2L436.8 572.6L436.7 571.7L437.3 570.1L437.7 569.6L437.7 568.6L438.2 567.6L438.9 567.3L439.7 567.4L441.4 567.6L443.1 567.3L444.0 566.8ZM446.7 566.3L447.3 567.2L448.1 567.0L447.5 568.0L448.1 568.3L447.2 569.1L447.1 568.2L446.6 567.5ZM447.2 572.0L448.9 571.8L450.4 572.4L449.5 572.7L447.8 572.6ZM444.9 572.3L446.0 572.2L446.3 572.7L445.2 573.0ZM450.6 569.6L452.4 569.1L454.2 569.7L454.3 570.9L454.9 572.4L455.8 572.4L457.0 571.1L458.1 570.3L459.8 570.9L461.8 571.5L463.9 572.2L465.1 572.7L466.3 573.1L467.7 574.5L469.0 575.3L470.0 576.3L469.0 576.3L469.6 577.2L470.4 577.7L470.8 578.9L471.9 579.6L473.5 580.3L472.5 580.8L470.2 580.2L469.3 579.5L467.9 578.3L466.2 577.4L465.0 578.0L464.7 579.0L462.1 579.1L461.5 578.3L460.4 578.0L459.6 578.1L458.5 578.2L459.3 576.6L459.3 575.2L457.5 574.2L455.8 573.6L454.1 573.1L453.7 572.8L452.1 571.9L453.5 571.5L451.8 570.9L450.9 570.2L450.6 569.6ZM470.5 575.0L471.9 574.9L473.1 574.9L474.0 574.2L475.1 573.4L475.0 574.3L474.2 575.0L473.1 575.8L471.9 575.8L470.5 575.0ZM473.4 571.6L474.8 572.3L476.0 573.5L475.6 574.0L474.6 572.6L473.4 571.8ZM477.9 574.9L479.3 576.0L478.8 576.5L477.9 575.5ZM430.7 594.8L431.2 594.0L432.2 593.7L434.3 592.5L436.4 592.1L438.0 591.7L439.7 590.3L440.5 589.4L441.3 587.5L442.1 588.6L443.1 587.0L443.7 585.8L444.9 584.7L445.9 584.3L447.2 585.6L447.5 585.8L448.9 585.6L448.9 584.1L450.4 582.8L451.2 582.6L452.4 582.5L451.8 581.4L452.5 581.5L453.5 582.1L455.2 582.5L457.0 582.2L457.4 582.6L457.0 583.7L456.4 584.4L456.3 585.6L455.8 585.8L457.0 586.8L458.5 587.4L459.8 588.1L460.5 589.0L461.9 588.8L462.7 587.0L462.8 585.3L462.8 583.5L463.1 583.0L463.4 581.2L463.9 580.8L464.4 582.1L464.7 582.9L465.1 584.4L466.2 584.9L467.1 586.4L467.7 588.1L468.1 590.0L468.8 590.9L470.5 591.8L471.6 593.1L472.5 594.8L472.5 601.7L430.7 601.7L430.7 594.8ZM309.3 517.8L310.4 517.3L311.0 518.4L310.9 520.3L310.0 520.8L309.5 519.9ZM309.7 515.5L310.7 514.6L310.8 516.1L310.4 517.0L309.9 516.4ZM314.1 522.1L315.4 521.8L317.8 521.6L317.3 523.2L317.2 523.9L315.4 523.2L314.2 522.6ZM326.9 525.6L328.0 525.7L330.1 525.9L330.0 526.3L328.0 526.4L326.9 526.0ZM337.0 526.3L337.8 525.7L339.7 525.3L339.0 526.3L337.8 526.8ZM302.6 519.7L303.4 519.3L303.8 519.6L303.3 520.2ZM312.5 492.3L314.2 491.5L314.4 492.9L313.7 493.7L312.7 493.3ZM311.1 492.7L312.2 492.7L312.2 493.5L311.4 493.5ZM320.7 489.5L321.6 487.8L321.8 488.4L321.1 489.7ZM324.9 486.9L325.7 486.3L326.6 486.5L326.0 487.2L325.2 487.6ZM361.2 554.3L362.6 554.3L362.3 554.6L361.4 554.6ZM345.0 575.2L345.3 575.5L345.2 575.9ZM467.3 513.4L469.0 511.9L471.1 510.6L470.8 511.1L468.8 512.6ZM478.8 502.7L479.6 501.6L479.6 502.5ZM108.8 495.9L107.6 497.0L106.5 497.2L108.0 496.1ZM105.3 498.2L101.9 498.9L99.0 499.3L101.9 499.3ZM97.3 499.8L95.0 500.0L96.1 500.2ZM487.7 486.5L489.0 485.2L488.4 486.1ZM457.9 494.1L458.9 493.5L458.7 494.5ZM237.0 457.0L238.8 455.0L240.2 457.3L238.3 458.3ZM120.3 545.3L121.4 545.6L120.9 546.8L120.2 546.1ZM119.5 544.4L120.3 544.6L119.8 544.8ZM117.8 543.6L118.3 543.8L118.0 543.9ZM115.9 543.0L116.5 543.0L116.3 543.2ZM194.5 569.0L195.2 569.1L195.0 569.8L194.5 569.6ZM491.6 585.8L492.3 586.1L493.0 587.6L492.4 587.4ZM503.9 588.8L505.4 588.8L505.2 589.6L504.0 589.5ZM505.6 587.6L507.0 587.2L506.5 588.0ZM101.0 584.1L101.6 584.1L102.5 584.6L101.3 584.4ZM488.6 591.9L490.3 593.0L492.1 594.6L491.5 594.6L489.2 593.0ZM187.6 422.4L189.9 423.0L190.5 419.1L188.2 417.9ZM189.4 425.6L192.2 425.6L191.9 423.5L189.9 423.5ZM188.8 437.1L191.9 438.4L192.2 435.3L189.9 434.4ZM168.6 426.2L172.7 425.6L173.2 422.4L169.8 421.3ZM169.2 420.8L173.2 420.8L173.2 417.3L170.4 417.9ZM162.3 434.4L164.6 434.8L164.0 432.5ZM204.1 476.3L205.5 478.0L206.6 476.8L204.9 476.2ZM207.5 477.8L208.3 479.2L208.6 477.8ZM205.5 497.4L207.0 498.2L206.8 497.4Z"/></clipPath></defs><g clip-path="url(#mc)"><path d="M106.4 469.3L108.4 467.6L111.1 466.5L113.6 467.6L113.4 465.3L111.3 464.7L110.5 462.9L107.9 461.4L108.6 459.6L111.7 458.0L113.5 455.0L116.8 453.3L119.7 451.2L122.6 453.0L124.9 453.0L128.9 454.7L133.0 455.7L137.6 457.3L139.9 457.3L142.7 459.6L145.0 457.7L146.8 457.7L150.2 455.7L152.5 454.3L154.2 457.3L156.6 458.0L156.8 455.7L160.0 456.7L164.0 458.3L167.5 459.6L168.1 461.7L167.3 462.9L170.9 463.2L173.2 462.6L175.0 464.1L175.8 465.9L176.7 463.5L177.8 461.4L180.1 462.3L183.0 463.2L186.5 462.9L187.1 460.8L188.8 461.7L189.6 464.4L190.2 462.0L191.7 459.9L189.6 457.7L189.0 454.3L189.4 451.2L191.0 449.1L192.2 450.9L193.0 453.3L194.2 457.0L195.7 458.0L195.7 460.8L197.4 458.6L198.6 460.2L198.8 463.5L200.1 463.2L201.2 460.2L201.8 456.7L204.9 456.7L206.3 458.6L206.2 461.4L205.1 463.5L206.3 464.7L203.7 467.3L202.2 467.6L200.9 466.7L199.9 468.1L200.9 470.3L199.1 471.9L198.0 473.5L196.0 474.0L195.3 475.6L193.4 477.0L192.2 479.0L191.3 481.1L190.7 483.2L191.1 485.8L192.8 486.1L193.4 489.3L195.3 489.7L197.6 490.5L199.4 491.7L201.4 492.7L205.1 493.3L205.2 495.3L205.2 497.6L206.3 499.1L207.2 500.7L208.3 500.7L209.2 499.1L208.9 496.5L208.3 494.5L210.1 493.1L211.6 491.1L211.5 488.6L209.5 486.1L210.6 483.6L209.8 481.3L210.3 477.5L212.9 477.8L214.9 477.5L217.0 479.2L218.7 480.9L219.6 481.3L219.9 485.4L221.6 486.7L223.5 485.8L224.8 483.4L225.6 482.3L226.4 484.5L227.9 487.6L228.9 490.1L230.2 492.5L232.5 494.1L234.0 496.1L235.6 498.0L235.4 499.8L233.7 500.7L231.4 502.5L228.5 502.7L225.6 502.5L223.3 502.7L222.0 504.5L220.4 506.0L218.9 507.7L217.9 508.5L219.3 507.7L221.2 505.7L223.5 504.5L225.8 505.0L225.3 506.3L223.5 506.5L225.0 507.5L225.3 509.3L226.8 510.2L229.1 510.2L230.3 508.2L230.9 509.8L229.4 511.0L226.8 512.1L224.5 513.8L223.7 512.6L225.4 511.0L223.7 511.1L222.5 511.9L220.7 512.6L219.0 513.7L218.5 515.2L219.3 516.3L217.9 516.9L216.1 517.3L214.7 518.2L214.4 519.7L213.5 520.8L212.8 522.3L212.1 523.6L212.6 525.2L212.9 526.0L211.5 526.8L210.1 527.8L208.7 528.7L206.6 530.4L206.2 532.3L207.1 534.9L207.8 537.1L207.4 538.9L206.5 539.1L205.7 538.0L204.7 535.8L204.5 534.3L203.2 533.0L201.6 533.4L199.7 532.5L197.6 532.6L197.0 534.2L195.1 534.0L192.2 533.4L190.5 534.0L188.2 535.8L187.9 538.1L187.3 540.6L187.3 542.7L188.0 544.9L189.2 546.5L190.5 547.2L191.7 547.7L194.0 547.2L195.1 546.7L195.7 544.8L196.3 544.2L198.6 543.6L199.7 543.7L199.9 544.3L199.1 546.0L198.8 547.6L198.2 548.5L198.0 550.3L199.1 550.5L200.9 550.4L202.6 550.5L204.1 551.5L203.7 553.8L203.5 555.5L203.6 556.3L204.3 557.3L205.2 558.3L206.6 558.6L207.9 558.0L208.9 557.8L210.3 558.6L210.9 558.9L210.2 560.4L209.6 559.2L208.3 558.5L207.4 559.3L207.2 560.4L206.0 560.0L204.8 559.3L203.6 559.0L203.2 558.0L202.0 557.5L201.1 556.9L201.2 556.0L199.7 554.4L198.9 553.6L197.4 553.3L195.8 552.9L194.4 552.5L193.5 551.9L191.7 550.2L190.5 550.2L188.8 550.6L187.1 550.1L184.9 549.3L182.4 548.0L180.6 547.4L179.0 546.1L178.2 545.0L178.6 543.7L177.4 541.6L175.5 539.4L173.9 538.4L173.8 537.2L172.1 535.6L170.4 533.7L169.8 531.7L167.7 530.6L167.8 532.3L169.2 534.3L170.4 536.2L171.5 537.9L172.5 540.0L173.8 541.6L173.1 542.0L171.4 540.3L170.7 539.4L170.6 537.9L169.2 537.1L167.7 535.8L168.4 534.9L166.6 532.7L165.5 530.8L165.0 529.6L163.6 527.8L161.2 527.0L159.7 524.2L158.9 522.3L157.4 519.9L156.7 518.5L156.9 516.1L156.6 514.6L157.1 511.4L157.1 509.3L156.3 505.8L158.3 506.2L158.9 507.5L158.6 504.8L157.9 504.1L156.2 502.7L153.7 501.3L152.5 498.5L150.7 495.7L149.6 494.1L148.7 492.5L147.1 490.5L145.6 487.6L143.9 486.3L142.7 487.2L141.0 485.4L138.9 483.9L136.4 483.2L134.1 483.2L131.8 481.3L129.5 482.3L127.8 483.6L125.1 485.0L125.7 482.0L127.2 480.4L125.4 480.9L124.3 482.7L123.2 484.7L122.4 486.7L120.3 488.6L118.0 490.7L115.1 492.7L112.8 493.7L110.2 494.5L112.2 492.5L114.5 491.7L116.8 489.7L118.5 486.9L119.1 485.8L116.8 486.1L115.1 485.6L113.4 486.1L113.4 483.6L111.1 483.2L109.4 480.9L108.8 478.5L110.2 475.8L112.2 474.8L114.5 474.5L114.5 472.2L112.2 471.9L109.5 472.2L108.1 471.7L106.4 469.3ZM223.9 478.7L225.0 476.5L223.3 475.6L221.6 474.0L224.5 474.8L226.2 474.8L225.3 471.9L223.3 469.5L221.8 467.0L224.5 468.4L226.8 471.1L228.5 468.7L229.2 466.5L227.9 464.1L225.6 462.3L222.7 459.3L221.6 456.0L220.8 454.0L218.1 451.6L215.3 449.8L212.9 447.6L210.6 446.1L207.8 442.5L206.0 442.5L202.6 443.3L200.9 442.1L197.2 443.3L196.3 447.2L196.8 451.9L198.6 454.7L200.3 455.4L202.0 456.0L205.5 456.0L208.3 456.7L210.6 456.4L212.9 459.3L214.9 461.7L215.8 464.7L214.9 467.6L214.3 470.3L212.9 471.9L210.1 471.1L209.7 473.3L212.4 473.0L214.1 472.5L217.0 474.3L219.3 476.5L221.6 477.8L223.9 478.7ZM179.0 460.2L182.4 458.3L183.8 455.0L181.3 454.0L179.6 451.6L179.0 446.8L176.1 444.1L174.4 446.1L172.7 445.7L169.8 446.4L167.5 444.5L164.6 445.7L162.9 450.1L164.3 453.7L167.5 454.7L170.1 455.0L165.8 457.0L165.0 459.3L166.9 458.9L169.0 460.5L173.2 460.2L175.5 459.6L179.0 460.2ZM158.3 451.9L155.4 449.1L156.2 443.3L157.1 440.1L160.6 439.2L164.0 440.9L166.6 444.1L164.6 446.4L162.3 449.8L160.6 451.2L158.3 451.9ZM177.8 437.1L175.5 438.4L170.9 439.6L168.6 438.4L165.2 435.7L164.6 432.5L167.5 430.6L171.5 433.9L174.4 429.7L177.8 432.5L177.8 437.1ZM185.9 451.2L182.4 447.6L181.9 444.5L183.6 442.1L187.1 441.7L188.2 445.7L188.4 449.4L185.9 451.2ZM189.8 448.3L189.9 442.1L192.8 440.9L195.7 442.1L195.9 445.7L193.4 449.1L189.8 448.3ZM185.3 458.6L187.1 456.4L189.4 457.3L189.9 459.9L187.6 460.8L185.3 458.6ZM207.8 438.8L208.0 435.3L206.6 433.5L203.2 433.5L198.6 434.4L196.8 430.2L194.0 429.7L188.8 428.2L188.8 434.4L192.8 437.1L194.0 438.4L198.6 439.2L203.2 439.2L207.8 438.8ZM187.6 436.2L184.8 437.1L181.9 434.8L180.1 432.1L183.6 429.2L187.1 430.2L187.6 436.2ZM166.9 432.5L162.9 433.5L158.9 431.1L161.7 425.6L166.3 426.2L166.9 432.5ZM185.9 423.5L181.3 423.5L179.0 417.9L182.4 415.0L185.9 417.9L185.9 423.5ZM207.8 431.6L210.1 429.7L209.5 425.1L212.4 422.4L213.5 419.1L212.4 415.0L217.0 412.5L220.4 407.2L225.0 401.5L229.1 392.7L226.2 388.2L219.3 386.4L211.2 387.3L205.5 390.0L199.7 394.3L195.1 399.2L198.6 405.8L200.9 409.2L203.2 413.7L200.9 416.8L198.6 420.8L198.0 425.1L198.6 429.7L202.0 431.1L207.8 431.6ZM199.1 420.8L196.3 421.3L192.8 415.6L190.5 410.5L189.4 405.8L194.0 401.5L197.4 407.2L199.4 413.7L199.1 420.8ZM199.7 473.0L201.4 475.3L204.3 475.3L206.6 474.5L207.4 473.5L205.7 472.5L203.7 470.1L202.0 468.1L200.9 469.5L199.7 473.0ZM231.6 507.0L232.3 505.7L233.1 503.4L234.2 501.3L235.6 500.2L235.6 501.8L234.7 503.1L236.0 503.2L237.7 503.9L238.3 505.5L239.2 507.2L238.6 508.8L237.7 508.2L236.0 508.4L235.4 507.2L231.6 507.0ZM157.8 505.8L155.4 505.0L152.2 502.0L153.1 501.5L155.6 502.7L157.5 504.6L157.8 505.8ZM148.8 499.3L147.3 497.6L146.8 495.5L148.1 495.5L148.3 497.6L148.8 499.3ZM124.7 488.9L122.0 489.9L122.0 488.2L123.7 487.6L124.7 488.9ZM102.1 475.0L104.2 475.8L105.6 475.3L104.2 474.3L102.1 475.0ZM107.2 483.2L108.8 483.6L109.1 482.5L107.6 482.5ZM225.6 503.2L228.5 504.6L228.8 504.1L226.8 503.2ZM225.7 508.7L227.3 509.7L228.5 509.2L226.4 508.4ZM249.3 483.6L246.9 481.6L244.0 480.2L242.3 477.3L240.6 473.0L239.4 469.5L238.0 465.3L238.8 460.8L241.1 458.6L240.0 457.3L237.0 457.0L237.0 454.0L240.0 452.6L236.5 449.1L235.4 443.3L233.1 436.2L228.5 432.1L223.9 432.5L220.4 430.2L218.1 426.7L215.8 421.3L221.0 416.8L225.0 411.8L222.7 409.2L226.2 403.7L230.8 396.0L238.8 393.5L244.6 392.7L248.1 396.8L253.8 385.4L261.9 381.5L268.8 384.5L274.5 392.7L265.3 396.8L273.4 399.9L280.3 399.2L286.3 400.7L281.4 407.2L278.6 410.5L279.7 416.8L276.8 422.4L278.6 427.7L276.3 432.5L277.4 437.1L275.9 440.5L274.2 444.5L274.5 449.1L271.7 450.9L274.5 454.3L272.2 455.4L273.4 456.4L270.5 459.3L267.6 461.4L263.0 462.3L260.7 466.7L257.3 468.7L253.8 470.9L252.7 474.8L250.9 478.5L250.4 482.0L249.3 483.6ZM271.7 469.5L274.0 467.0L275.3 469.3L276.8 468.1L279.1 467.6L281.4 466.7L283.0 468.1L284.3 470.9L282.6 472.7L279.1 474.8L276.3 474.5L273.7 474.0L274.5 472.2L272.2 471.1L274.3 470.1L271.7 469.5ZM210.9 558.9L211.5 559.6L212.7 557.8L212.9 556.6L213.8 556.0L215.8 555.7L217.6 554.5L217.9 555.2L217.1 555.9L217.6 556.3L218.1 557.8L217.2 558.1L217.6 556.5L219.0 555.7L219.3 554.7L219.9 555.5L221.2 556.3L223.9 556.6L225.6 557.0L227.3 556.5L228.5 556.5L227.8 557.3L229.6 557.8L230.2 559.0L231.9 559.6L233.1 560.9L234.2 561.8L236.5 562.0L237.7 562.1L239.4 562.8L240.6 563.7L241.6 566.4L242.3 567.5L242.1 568.6L243.8 569.0L244.6 569.4L246.3 569.8L248.5 570.7L248.9 571.6L250.4 571.4L252.1 571.9L253.8 571.8L255.5 572.8L257.0 574.1L259.2 574.5L259.8 576.8L259.6 578.7L257.8 580.6L256.9 581.8L255.5 583.5L255.0 585.3L255.0 587.6L254.6 589.4L254.0 591.4L253.2 592.7L252.7 594.2L251.5 595.4L248.6 595.7L246.3 596.9L244.0 598.9L243.9 601.7L218.4 601.7L218.7 597.9L218.9 595.4L219.2 593.0L218.9 589.9L217.6 588.6L215.3 587.4L213.3 586.2L212.0 584.6L211.0 582.3L209.7 580.0L208.6 577.7L207.8 576.4L206.4 575.5L206.3 574.0L207.4 572.5L207.9 571.5L206.7 571.3L206.8 569.8L207.7 568.6L207.8 567.7L209.0 567.2L209.2 566.6L210.6 565.7L210.9 564.3L210.6 562.4L210.9 561.2L210.2 560.4L210.9 558.9ZM202.1 543.2L203.2 542.1L204.9 541.7L207.2 541.7L208.9 542.6L210.6 543.3L212.7 544.6L214.4 545.3L213.5 545.6L210.4 545.8L211.0 544.8L209.5 544.3L207.8 543.5L206.0 542.8L204.9 542.4L203.2 543.1L202.1 543.2ZM214.2 547.4L216.2 547.2L216.1 546.4L215.4 545.8L217.0 545.6L219.3 545.8L221.1 547.2L219.9 547.6L218.1 547.9L217.4 548.3L216.4 547.8L214.2 547.4ZM209.7 547.4L211.2 547.3L212.1 547.9L211.0 548.2L209.7 547.7ZM222.5 547.4L224.2 547.4L224.1 547.9L222.5 547.9ZM228.7 556.5L229.6 556.3L229.6 557.1L228.7 557.1ZM209.7 539.8L210.4 539.3L210.5 540.3L209.8 540.4ZM210.6 537.1L211.2 537.5L211.0 537.9L210.2 537.4ZM293.1 525.2L293.7 525.0L296.4 525.9L297.5 526.1L299.2 525.3L301.6 524.3L303.3 523.8L305.6 523.8L307.9 523.5L310.2 523.2L311.2 523.1L312.5 523.5L311.9 524.9L312.4 526.3L311.4 527.7L312.5 528.6L315.0 529.1L317.3 529.8L318.3 531.4L320.6 532.2L322.1 532.6L322.9 531.7L322.9 530.2L324.6 529.1L326.3 529.6L327.5 530.4L328.6 530.9L330.9 531.3L333.2 531.8L334.4 531.4L335.5 531.0L337.0 531.4L337.3 533.0L337.5 534.3L338.5 536.0L339.2 537.9L340.1 539.6L340.9 540.8L342.2 543.0L342.7 544.3L342.7 546.0L344.2 547.9L345.0 549.9L345.7 551.1L347.0 552.0L348.8 553.8L349.7 554.4L349.6 555.5L350.5 556.7L351.6 556.8L353.9 556.0L356.2 555.8L358.9 555.2L358.6 556.8L357.4 559.0L356.2 561.3L355.1 563.5L353.4 565.5L352.0 566.4L349.9 568.1L348.2 569.8L347.0 570.9L346.1 572.0L345.5 573.2L344.7 574.9L345.1 576.4L345.3 578.3L345.9 580.4L346.6 582.9L346.7 585.3L346.2 587.0L344.7 588.2L342.4 589.4L340.0 591.5L340.4 593.6L340.7 596.0L337.8 598.5L337.8 601.7L317.1 601.7L316.9 597.9L316.5 595.3L315.4 593.0L313.7 589.4L313.4 587.0L313.8 586.1L315.3 583.0L315.7 581.2L315.0 578.7L314.6 576.6L313.9 575.5L313.7 574.3L313.4 574.1L312.5 572.8L311.0 571.5L310.2 569.8L309.9 569.4L310.7 568.2L310.9 567.0L311.1 565.8L311.0 564.7L310.8 564.1L310.0 563.5L309.4 563.4L307.9 563.7L306.8 563.8L305.8 562.4L304.9 561.5L303.8 561.4L302.2 561.5L301.2 561.7L299.9 562.3L297.5 563.2L295.8 562.9L295.2 562.6L292.9 563.1L291.2 563.7L289.5 563.0L287.4 561.5L286.6 560.8L285.5 560.1L284.7 559.0L284.3 557.8L282.9 556.5L282.6 555.9L281.9 555.1L280.6 554.4L280.5 553.3L279.7 551.8L280.9 550.3L281.3 547.8L280.9 546.1L280.3 544.3L280.4 543.1L281.4 541.0L282.7 539.0L283.2 538.0L284.3 537.0L285.0 535.7L287.2 534.6L288.3 533.7L288.8 532.5L288.6 531.0L289.3 530.0L291.1 528.2L292.0 527.7L292.7 526.3L293.1 525.2ZM356.6 582.3L357.7 586.4L356.8 588.8L356.2 591.2L355.1 594.8L353.9 597.9L351.6 598.5L350.1 596.0L349.7 593.6L350.8 591.8L350.5 588.8L351.6 587.0L353.9 585.8L355.1 584.1L356.6 582.3ZM289.5 523.5L289.0 521.0L289.7 518.4L289.7 516.1L289.1 514.6L290.6 513.5L293.5 513.8L295.8 514.0L297.8 514.0L298.5 512.2L298.6 510.6L298.5 509.5L297.5 508.2L296.6 507.4L294.7 506.7L294.4 505.8L296.4 505.1L298.0 505.5L297.8 503.6L298.5 504.1L300.0 503.9L301.6 502.9L301.9 501.5L303.5 500.7L304.5 499.5L305.3 497.6L306.8 496.8L307.9 496.5L309.6 496.1L309.9 495.1L309.4 493.9L309.2 492.7L309.2 490.7L309.7 489.5L312.1 488.2L311.8 490.7L311.4 492.7L310.9 493.9L311.4 494.9L312.5 495.7L313.9 495.3L315.4 494.9L316.3 495.9L318.3 495.1L320.6 494.1L321.5 494.9L322.6 494.9L322.9 493.9L324.0 492.7L324.0 490.1L324.7 488.4L326.3 489.7L327.7 489.3L327.9 486.9L326.9 485.8L326.9 485.0L328.4 484.3L330.4 484.1L332.1 484.3L334.6 483.4L333.2 482.7L332.7 481.8L330.9 482.0L328.6 482.7L326.3 483.4L325.2 482.0L324.4 479.7L324.3 476.1L325.7 474.0L328.0 471.4L329.1 470.9L327.7 468.7L325.4 469.0L324.4 471.7L323.4 474.0L321.1 476.1L319.8 477.8L319.6 480.9L319.8 481.8L321.1 482.7L321.1 484.7L319.4 486.3L318.8 488.6L318.5 490.7L318.0 491.5L316.5 491.7L316.2 492.9L314.8 492.9L314.5 491.3L313.7 488.6L313.5 488.2L312.7 485.4L312.2 483.4L311.7 485.0L310.4 486.1L309.1 487.4L307.9 487.6L306.4 485.8L305.8 482.3L305.6 479.7L306.2 478.0L307.3 476.8L309.1 475.0L311.0 474.0L312.5 471.4L314.2 468.1L315.4 465.3L316.4 464.4L317.7 461.7L318.8 459.9L321.7 457.0L324.0 456.0L326.3 454.3L329.5 452.3L332.1 453.0L333.8 454.3L335.5 455.0L334.4 456.7L336.7 456.7L338.4 458.3L341.3 459.3L343.6 461.4L346.5 463.5L347.3 465.9L345.9 467.6L343.6 467.6L340.1 466.7L337.3 465.0L338.4 466.7L339.9 469.5L339.9 472.5L341.9 473.5L343.6 472.7L343.0 470.9L346.5 471.9L345.9 469.5L348.2 467.0L350.7 468.1L350.5 465.3L349.9 460.8L352.8 462.3L352.8 465.3L353.9 465.3L355.7 463.2L357.4 461.7L360.9 460.2L362.6 461.4L366.0 460.2L367.8 460.2L369.5 458.3L369.5 456.7L374.1 459.3L376.4 461.4L378.1 461.4L378.7 457.7L377.0 456.0L376.6 452.6L378.7 449.1L379.3 445.3L380.4 444.1L383.3 446.1L383.3 452.6L383.9 457.7L383.9 462.3L382.1 466.2L383.9 466.7L385.6 462.3L386.2 456.0L385.0 450.9L386.2 447.2L388.5 447.2L389.6 449.1L391.9 449.1L394.2 450.9L396.0 455.4L395.4 450.9L392.5 443.3L396.5 442.1L400.0 437.9L400.0 436.2L404.6 433.9L409.2 432.1L413.8 430.2L416.1 427.7L419.9 424.1L421.9 425.6L424.2 429.2L428.8 430.2L430.5 433.5L429.9 439.2L426.5 441.3L423.0 444.1L426.5 442.5L429.9 442.1L431.1 442.9L435.7 443.3L438.0 445.3L441.4 445.3L442.6 442.5L446.0 443.3L448.3 445.3L448.9 449.1L448.3 452.6L450.6 452.6L452.4 449.8L452.9 450.9L455.2 450.5L457.5 451.2L459.8 447.9L461.8 445.7L464.4 446.4L467.9 447.6L472.5 450.5L473.7 451.6L476.0 452.6L479.4 452.6L482.9 453.3L485.2 457.3L487.5 457.0L490.9 457.7L493.2 456.0L495.5 459.3L496.1 455.7L499.0 456.7L502.4 457.0L504.7 458.0L507.0 459.3L510.5 461.4L512.8 463.8L516.2 465.3L518.9 467.9L518.0 469.5L515.7 472.2L514.9 472.5L512.2 471.4L510.5 469.5L508.2 468.1L507.0 470.9L504.2 471.7L506.1 477.8L503.6 477.3L500.1 479.0L497.8 480.9L495.9 483.4L493.2 482.0L490.9 483.2L489.8 483.2L488.0 483.6L487.5 486.5L486.9 488.0L487.8 491.3L486.3 493.7L484.0 497.2L482.5 497.6L482.1 499.5L480.2 501.5L479.4 499.5L478.9 495.7L479.1 491.7L480.3 488.6L482.3 486.5L483.8 484.3L486.1 482.3L488.0 479.0L489.2 477.5L486.9 479.5L484.4 479.0L484.0 481.3L481.7 479.0L480.2 479.7L478.3 483.2L477.7 484.3L473.4 484.3L471.3 483.9L467.9 484.7L464.4 484.7L461.6 487.6L459.3 490.1L457.5 493.7L455.8 494.3L458.1 496.1L460.4 495.3L462.5 497.0L462.1 497.6L462.6 499.1L461.8 501.3L461.5 504.8L459.8 508.2L458.7 509.8L456.4 512.2L455.2 514.0L451.8 514.4L450.6 515.2L450.3 515.7L449.2 516.9L449.1 517.9L447.2 519.1L446.6 519.9L446.6 520.3L447.6 521.3L448.8 523.5L448.9 524.9L448.4 526.1L447.2 526.6L445.5 527.1L445.2 525.6L445.6 523.5L445.6 522.8L444.3 522.5L443.5 521.9L444.1 519.9L443.0 519.1L441.4 519.7L439.7 520.8L440.3 518.4L439.1 517.8L437.5 519.3L435.4 520.6L436.6 522.1L436.8 523.2L438.9 522.3L440.8 522.9L439.1 524.0L438.3 524.7L437.0 526.3L438.3 527.2L439.0 529.0L440.0 530.6L440.0 531.4L439.1 532.2L440.3 533.0L439.8 534.9L438.5 536.6L437.5 538.1L436.6 539.4L435.8 540.0L434.5 541.3L434.2 541.5L432.2 542.2L431.3 542.7L429.9 543.1L428.2 543.7L427.0 544.1L426.8 545.2L426.2 544.3L425.3 543.6L424.7 543.6L424.2 543.7L422.8 544.6L421.9 546.1L421.6 547.0L422.4 548.2L423.6 549.5L424.5 550.3L425.3 552.0L425.7 553.8L425.5 555.2L424.2 556.3L423.0 556.8L422.4 557.7L421.1 558.8L420.5 558.9L420.7 557.3L420.1 556.8L419.0 556.6L418.4 555.8L417.6 554.7L416.1 554.1L415.5 553.2L415.0 553.8L415.0 555.0L414.4 556.1L414.0 556.7L414.7 558.1L415.3 559.0L415.5 560.5L416.7 560.9L417.5 561.6L418.9 563.5L418.9 564.7L419.6 565.8L419.9 567.1L419.3 567.2L418.7 566.8L417.5 566.2L416.4 565.3L415.6 563.9L415.3 562.5L415.2 561.4L414.6 560.7L413.8 559.9L413.0 559.7L413.0 558.4L413.2 557.3L413.3 555.5L413.3 554.4L412.9 552.6L412.3 550.9L412.2 549.7L411.3 549.1L410.6 549.6L409.5 550.5L408.4 550.3L408.6 548.5L408.3 547.0L407.5 545.8L406.8 545.4L406.1 544.3L405.5 542.7L404.6 542.5L404.0 543.1L402.9 543.3L401.7 543.5L401.1 543.3L400.0 543.7L399.8 544.9L398.6 545.8L397.7 546.5L396.5 547.6L395.7 548.3L394.6 549.6L393.3 550.4L392.3 550.9L392.0 552.6L392.3 553.7L391.8 555.2L391.7 556.9L391.0 558.1L389.9 558.5L389.1 559.4L388.4 559.0L387.6 557.3L387.1 555.8L385.9 553.9L384.8 550.9L384.2 549.1L383.6 546.7L383.5 544.9L383.6 544.3L383.4 542.8L382.8 544.1L381.6 544.7L380.4 544.3L380.0 543.6L379.3 542.7L380.8 542.0L379.3 542.1L378.7 541.5L378.3 541.0L377.4 540.6L377.0 539.6L376.4 538.9L374.1 539.1L371.6 539.3L370.6 539.3L369.6 539.0L367.8 538.9L366.4 538.5L365.5 537.1L364.7 536.6L363.2 537.2L362.0 537.4L360.3 536.2L358.3 534.4L357.6 533.0L356.2 532.5L355.8 533.1L355.1 533.8L355.7 534.9L356.2 536.2L357.4 537.2L357.6 538.6L358.3 539.6L358.3 538.8L358.8 538.0L359.2 539.0L359.0 539.9L360.3 540.4L362.5 540.0L363.5 539.0L364.4 538.0L364.8 537.8L364.8 539.4L365.2 540.4L367.3 541.1L368.7 542.5L367.8 543.8L367.2 545.0L366.4 546.7L364.9 547.9L363.5 548.4L362.0 549.1L359.9 550.3L358.6 551.2L356.2 552.2L354.5 553.1L351.6 554.0L349.9 554.1L349.6 553.2L349.2 551.5L348.9 549.7L348.8 549.2L347.3 547.0L345.9 545.2L344.9 543.7L344.2 541.9L343.6 540.5L342.4 538.8L341.9 537.9L340.7 536.2L339.9 535.5L340.1 533.7L339.3 535.8L338.4 535.1L337.4 533.1L337.0 531.3L339.2 531.3L339.9 530.2L340.1 529.3L340.7 527.8L341.1 525.6L341.5 524.0L340.7 524.0L339.7 523.8L338.4 524.7L337.6 524.9L335.2 523.6L333.8 524.6L332.4 523.8L331.4 523.5L330.7 521.5L330.1 520.2L330.0 519.1L331.5 518.5L333.2 518.5L334.3 518.1L333.2 517.6L333.3 517.3L335.8 517.5L336.5 516.9L340.4 516.1L341.6 517.2L345.5 517.6L347.7 516.7L347.8 515.8L347.0 514.6L345.5 513.7L343.4 511.9L342.0 511.1L342.8 511.0L343.6 509.8L343.9 508.7L345.1 507.9L343.6 508.0L343.0 508.0L342.2 508.7L340.5 509.3L340.1 510.3L341.9 510.8L340.6 511.4L339.2 512.2L338.3 512.1L337.3 511.0L338.5 509.8L337.3 509.7L336.1 508.8L335.2 509.0L334.0 511.0L332.9 512.7L332.0 514.3L331.5 515.4L332.1 516.3L333.2 517.2L333.1 517.6L331.5 517.6L330.6 518.5L330.0 519.0L329.8 518.2L329.7 517.9L327.9 517.8L327.5 519.1L326.9 518.8L326.2 518.2L325.9 519.1L326.3 520.2L327.5 521.8L327.1 522.2L327.5 522.5L326.6 522.9L326.6 524.2L325.7 524.2L324.8 523.8L324.4 522.5L324.8 521.8L324.0 521.6L323.7 520.8L322.9 519.6L322.2 518.5L322.2 517.2L321.9 516.3L321.1 515.5L320.7 515.2L318.7 513.8L317.3 512.9L316.4 511.0L315.5 511.6L315.7 510.5L314.0 510.8L314.2 511.6L314.4 512.9L315.4 513.7L316.2 515.4L318.5 516.3L319.3 517.5L320.6 518.2L321.1 519.0L321.0 519.4L319.6 518.4L319.0 519.0L318.8 519.6L319.5 520.5L319.0 520.9L318.4 522.2L317.8 521.9L318.0 521.0L318.4 520.6L317.8 519.1L316.9 518.1L316.2 517.9L315.4 517.3L313.9 516.6L312.5 515.5L311.9 514.6L311.7 513.8L311.1 512.9L310.1 512.4L309.3 513.0L308.3 513.5L306.8 514.4L306.1 514.1L305.1 514.0L303.9 514.1L303.3 515.4L303.6 515.7L302.4 517.0L301.2 517.5L300.8 518.1L299.5 519.9L300.1 521.0L299.3 521.6L298.8 522.6L297.3 523.9L297.0 523.8L294.8 523.9L293.6 524.7L293.4 524.9L292.6 524.2L291.8 523.2L290.6 523.5L289.5 523.5ZM293.3 502.9L294.1 502.3L294.7 501.3L296.4 500.7L296.4 500.4L295.0 500.2L293.7 499.8L295.0 498.7L294.7 497.8L294.6 497.0L296.2 496.8L296.4 495.7L295.8 494.7L296.1 493.9L294.3 494.3L294.0 493.9L294.3 492.7L294.3 491.9L293.3 493.1L293.4 491.3L292.7 490.3L293.2 489.1L293.2 487.8L294.1 486.3L296.4 486.3L295.2 487.8L295.0 488.6L296.1 488.2L297.5 488.2L297.8 488.6L297.4 489.5L297.0 490.7L296.2 491.7L297.5 492.1L298.2 493.7L299.3 494.9L299.7 495.5L299.7 496.5L300.2 497.4L300.1 497.8L301.3 497.8L301.9 498.5L301.3 499.6L300.7 500.4L301.5 500.6L301.5 501.1L301.0 501.5L300.1 501.8L298.6 501.6L297.5 502.0L297.1 502.2L296.4 501.8L295.8 502.3L295.7 502.7L295.1 502.5L293.9 503.1L293.3 502.9ZM292.5 499.1L292.8 497.0L292.7 495.7L293.4 494.5L292.9 493.3L291.3 492.9L290.3 493.5L290.1 494.7L288.3 495.3L288.3 496.6L289.5 497.2L288.5 498.3L287.9 499.3L288.1 499.8L288.6 500.6L290.3 499.8L291.8 499.3L292.5 499.1ZM318.8 430.2L316.0 425.1L315.4 421.3L312.7 419.1L312.5 412.5L316.0 411.8L318.3 410.5L320.6 411.8L324.0 417.9L321.7 420.8L321.1 425.1L318.8 430.2ZM320.6 408.6L325.2 407.2L330.9 409.2L330.9 413.7L326.3 415.6L322.3 413.1L320.6 408.6ZM324.0 419.7L328.0 424.6L325.2 426.2L324.0 419.7ZM351.6 406.5L355.1 405.1L358.6 405.8L357.4 409.9L353.9 409.2ZM360.9 408.6L365.5 408.6L368.9 405.1L371.2 399.2L366.6 397.6L363.2 403.7ZM371.2 406.5L374.7 406.5L374.7 403.7L371.8 403.7ZM359.1 450.5L360.9 445.3L362.6 442.1L363.7 437.1L366.6 432.5L371.2 430.2L375.8 427.7L379.3 428.2L377.0 431.1L372.4 434.8L368.9 437.9L366.0 442.1L364.3 444.5L363.7 447.9L365.5 451.9L366.0 454.0L363.2 454.0L361.4 452.6L359.1 450.5ZM355.4 458.3L357.2 457.7L357.7 459.3L356.2 460.2ZM367.2 455.4L369.3 456.0L368.3 457.0ZM409.2 416.8L412.6 417.9L415.5 415.0L416.7 411.2L413.8 408.6L410.9 407.2L408.6 410.5L409.2 416.8ZM415.0 422.4L418.4 423.0L421.3 419.7L419.0 415.0L416.1 416.8L415.0 422.4ZM406.9 408.6L410.3 405.8L412.1 402.2L409.2 401.5L406.3 405.1ZM458.1 435.3L459.8 432.1L463.3 432.5L466.7 434.4L465.0 437.1L461.0 437.9L458.7 437.9ZM468.5 435.3L470.8 435.3L473.7 437.1L471.3 437.9L469.0 437.1ZM461.0 443.3L463.3 441.7L465.4 443.3L463.3 444.5ZM505.3 452.3L507.0 450.9L509.9 451.9L508.2 453.3L505.9 453.3ZM463.6 495.1L464.8 497.6L464.7 500.4L465.4 503.1L466.4 505.1L464.4 504.5L464.2 506.5L465.0 508.5L464.9 509.7L463.9 508.7L463.3 510.0L463.3 507.4L463.3 504.8L463.4 502.2L463.1 500.0L462.9 497.0L463.6 495.1ZM461.1 517.0L461.3 515.7L460.8 515.2L461.6 514.1L462.5 514.3L462.9 512.2L462.9 510.8L463.3 510.6L464.4 512.2L465.9 513.0L467.1 512.6L467.7 514.0L466.1 514.6L464.7 516.1L462.8 515.2L462.1 515.7L461.5 515.4L461.8 516.1L462.4 516.4L461.8 516.6L461.1 517.0ZM462.0 516.9L462.7 517.0L462.7 518.4L463.3 519.7L462.8 521.6L462.1 521.8L462.1 523.5L461.7 524.5L461.9 525.3L461.0 526.4L460.8 525.6L460.6 526.1L459.7 526.8L458.9 526.8L457.5 526.8L457.3 526.3L457.4 527.2L456.2 528.5L455.4 527.4L455.6 526.8L454.1 526.8L452.2 527.2L450.6 527.7L450.6 527.1L452.6 525.7L454.3 525.6L456.2 525.4L456.4 524.6L457.2 523.1L457.9 522.8L457.8 523.8L459.8 522.2L460.8 520.9L460.6 519.3L461.0 518.2L461.3 517.3L461.9 517.8L462.0 516.9ZM451.8 528.6L452.6 527.8L454.1 527.2L454.8 527.4L454.3 528.7L453.5 528.3L452.9 529.4L452.4 528.7L451.8 528.6ZM450.5 527.8L451.4 528.7L451.8 529.3L451.2 530.5L450.3 531.7L449.8 531.3L449.7 530.1L449.2 529.6L449.1 528.7L449.9 528.2L450.5 527.8ZM439.7 539.0L440.3 539.4L439.8 540.6L439.0 543.1L438.2 542.1L438.1 541.0L439.1 539.4L439.7 539.0ZM425.0 546.4L426.0 545.5L427.0 545.4L427.6 546.0L427.0 547.0L426.0 547.7L425.0 547.3L425.0 546.4ZM392.2 557.5L393.3 559.0L394.0 560.4L393.8 561.3L392.6 561.9L391.9 561.6L391.7 560.7L391.7 559.3L392.0 558.0L392.2 557.5ZM438.7 547.3L440.5 547.3L440.6 549.1L439.8 550.3L439.8 551.7L440.6 552.6L441.8 552.7L442.6 553.8L442.7 554.3L441.8 553.8L441.0 553.4L439.9 552.7L439.1 553.0L438.7 552.4L439.0 551.9L438.3 551.7L437.9 550.5L437.7 549.9L438.3 550.2L438.3 548.5L438.7 547.3ZM444.3 557.5L445.2 559.0L445.6 560.4L445.1 561.5L444.4 560.7L444.2 562.3L442.8 561.7L442.6 560.7L441.9 560.2L440.3 560.8L440.4 559.8L441.2 559.2L441.8 558.9L442.3 559.4L442.8 559.3L443.3 559.0L443.7 558.4L444.3 557.5ZM442.9 554.4L444.1 554.4L444.5 555.9L443.7 557.0L443.4 556.2L443.0 555.5ZM440.7 556.7L441.7 556.1L442.0 556.7L441.5 558.3L440.8 557.5ZM440.2 555.2L441.5 555.5L441.1 556.6L440.2 556.7ZM438.3 553.3L439.4 553.3L439.7 554.4L439.2 554.7L438.8 554.0ZM434.7 559.1L435.7 558.2L436.8 556.9L437.5 555.7L437.2 556.8L436.1 558.2L435.2 559.0ZM426.0 566.3L427.0 566.7L428.0 565.9L429.9 565.0L431.1 563.7L432.2 563.0L433.4 561.8L434.3 560.7L435.3 561.4L435.8 562.0L437.0 562.6L436.4 563.7L435.6 563.9L435.2 564.9L435.4 566.4L436.8 567.5L435.6 567.7L434.9 569.2L434.3 570.1L433.7 571.5L433.4 572.7L433.4 573.2L431.8 572.6L431.6 573.3L429.9 572.4L428.5 572.6L426.7 572.0L426.5 570.8L425.7 569.4L425.5 568.6L425.2 567.5L426.0 566.3ZM409.5 562.3L412.1 562.8L413.0 563.8L413.5 564.3L415.3 565.8L416.7 566.7L418.2 567.7L419.3 568.6L419.0 569.8L420.0 569.8L420.5 570.9L421.9 571.8L421.9 572.4L421.7 573.8L421.6 575.2L421.1 575.3L420.1 574.9L418.4 573.8L417.6 573.0L415.4 569.8L413.8 568.3L413.6 566.7L412.1 565.8L410.9 564.5L410.5 564.0L409.5 562.3ZM420.9 576.4L421.9 575.3L422.8 575.6L424.5 575.8L424.8 576.3L426.9 576.5L427.6 575.9L429.6 576.8L431.5 577.4L431.5 578.0L431.6 578.5L429.6 578.2L427.6 578.0L425.3 577.4L423.8 577.4L422.3 577.1L420.9 576.4ZM431.6 577.9L433.0 578.0L432.4 578.7ZM433.4 578.1L434.2 578.1L433.9 578.8L433.4 578.7ZM434.3 578.2L435.7 577.9L437.0 578.2L436.2 578.8L434.5 578.9ZM437.7 578.2L439.1 578.1L441.4 578.0L441.2 578.4L439.1 578.8L437.9 578.7ZM436.8 579.3L438.3 579.5L438.9 580.2L437.4 580.0ZM442.0 580.4L443.1 579.1L444.3 578.4L446.4 578.2L445.5 578.9L443.7 579.8L442.6 580.4ZM444.0 566.8L442.9 568.2L441.4 568.1L439.7 568.1L438.2 568.1L438.0 569.7L438.9 570.2L439.8 569.7L441.9 569.7L440.8 570.5L439.8 570.9L440.2 571.8L440.8 572.3L441.0 573.2L441.2 574.1L439.8 574.1L439.7 573.2L439.0 571.7L438.4 571.8L438.2 572.0L438.4 573.8L438.4 574.9L437.4 575.0L437.4 573.2L436.8 572.6L436.7 571.7L437.3 570.1L437.7 569.6L437.7 568.6L438.2 567.6L438.9 567.3L439.7 567.4L441.4 567.6L443.1 567.3L444.0 566.8ZM446.7 566.3L447.3 567.2L448.1 567.0L447.5 568.0L448.1 568.3L447.2 569.1L447.1 568.2L446.6 567.5ZM447.2 572.0L448.9 571.8L450.4 572.4L449.5 572.7L447.8 572.6ZM444.9 572.3L446.0 572.2L446.3 572.7L445.2 573.0ZM450.6 569.6L452.4 569.1L454.2 569.7L454.3 570.9L454.9 572.4L455.8 572.4L457.0 571.1L458.1 570.3L459.8 570.9L461.8 571.5L463.9 572.2L465.1 572.7L466.3 573.1L467.7 574.5L469.0 575.3L470.0 576.3L469.0 576.3L469.6 577.2L470.4 577.7L470.8 578.9L471.9 579.6L473.5 580.3L472.5 580.8L470.2 580.2L469.3 579.5L467.9 578.3L466.2 577.4L465.0 578.0L464.7 579.0L462.1 579.1L461.5 578.3L460.4 578.0L459.6 578.1L458.5 578.2L459.3 576.6L459.3 575.2L457.5 574.2L455.8 573.6L454.1 573.1L453.7 572.8L452.1 571.9L453.5 571.5L451.8 570.9L450.9 570.2L450.6 569.6ZM470.5 575.0L471.9 574.9L473.1 574.9L474.0 574.2L475.1 573.4L475.0 574.3L474.2 575.0L473.1 575.8L471.9 575.8L470.5 575.0ZM473.4 571.6L474.8 572.3L476.0 573.5L475.6 574.0L474.6 572.6L473.4 571.8ZM477.9 574.9L479.3 576.0L478.8 576.5L477.9 575.5ZM430.7 594.8L431.2 594.0L432.2 593.7L434.3 592.5L436.4 592.1L438.0 591.7L439.7 590.3L440.5 589.4L441.3 587.5L442.1 588.6L443.1 587.0L443.7 585.8L444.9 584.7L445.9 584.3L447.2 585.6L447.5 585.8L448.9 585.6L448.9 584.1L450.4 582.8L451.2 582.6L452.4 582.5L451.8 581.4L452.5 581.5L453.5 582.1L455.2 582.5L457.0 582.2L457.4 582.6L457.0 583.7L456.4 584.4L456.3 585.6L455.8 585.8L457.0 586.8L458.5 587.4L459.8 588.1L460.5 589.0L461.9 588.8L462.7 587.0L462.8 585.3L462.8 583.5L463.1 583.0L463.4 581.2L463.9 580.8L464.4 582.1L464.7 582.9L465.1 584.4L466.2 584.9L467.1 586.4L467.7 588.1L468.1 590.0L468.8 590.9L470.5 591.8L471.6 593.1L472.5 594.8L472.5 601.7L430.7 601.7L430.7 594.8ZM309.3 517.8L310.4 517.3L311.0 518.4L310.9 520.3L310.0 520.8L309.5 519.9ZM309.7 515.5L310.7 514.6L310.8 516.1L310.4 517.0L309.9 516.4ZM314.1 522.1L315.4 521.8L317.8 521.6L317.3 523.2L317.2 523.9L315.4 523.2L314.2 522.6ZM326.9 525.6L328.0 525.7L330.1 525.9L330.0 526.3L328.0 526.4L326.9 526.0ZM337.0 526.3L337.8 525.7L339.7 525.3L339.0 526.3L337.8 526.8ZM302.6 519.7L303.4 519.3L303.8 519.6L303.3 520.2ZM312.5 492.3L314.2 491.5L314.4 492.9L313.7 493.7L312.7 493.3ZM311.1 492.7L312.2 492.7L312.2 493.5L311.4 493.5ZM320.7 489.5L321.6 487.8L321.8 488.4L321.1 489.7ZM324.9 486.9L325.7 486.3L326.6 486.5L326.0 487.2L325.2 487.6ZM361.2 554.3L362.6 554.3L362.3 554.6L361.4 554.6ZM345.0 575.2L345.3 575.5L345.2 575.9ZM467.3 513.4L469.0 511.9L471.1 510.6L470.8 511.1L468.8 512.6ZM478.8 502.7L479.6 501.6L479.6 502.5ZM108.8 495.9L107.6 497.0L106.5 497.2L108.0 496.1ZM105.3 498.2L101.9 498.9L99.0 499.3L101.9 499.3ZM97.3 499.8L95.0 500.0L96.1 500.2ZM487.7 486.5L489.0 485.2L488.4 486.1ZM457.9 494.1L458.9 493.5L458.7 494.5ZM237.0 457.0L238.8 455.0L240.2 457.3L238.3 458.3ZM120.3 545.3L121.4 545.6L120.9 546.8L120.2 546.1ZM119.5 544.4L120.3 544.6L119.8 544.8ZM117.8 543.6L118.3 543.8L118.0 543.9ZM115.9 543.0L116.5 543.0L116.3 543.2ZM194.5 569.0L195.2 569.1L195.0 569.8L194.5 569.6ZM491.6 585.8L492.3 586.1L493.0 587.6L492.4 587.4ZM503.9 588.8L505.4 588.8L505.2 589.6L504.0 589.5ZM505.6 587.6L507.0 587.2L506.5 588.0ZM101.0 584.1L101.6 584.1L102.5 584.6L101.3 584.4ZM488.6 591.9L490.3 593.0L492.1 594.6L491.5 594.6L489.2 593.0ZM187.6 422.4L189.9 423.0L190.5 419.1L188.2 417.9ZM189.4 425.6L192.2 425.6L191.9 423.5L189.9 423.5ZM188.8 437.1L191.9 438.4L192.2 435.3L189.9 434.4ZM168.6 426.2L172.7 425.6L173.2 422.4L169.8 421.3ZM169.2 420.8L173.2 420.8L173.2 417.3L170.4 417.9ZM162.3 434.4L164.6 434.8L164.0 432.5ZM204.1 476.3L205.5 478.0L206.6 476.8L204.9 476.2ZM207.5 477.8L208.3 479.2L208.6 477.8ZM205.5 497.4L207.0 498.2L206.8 497.4ZM-124.9 523.5L-125.3 521.0L-124.6 518.4L-124.6 516.1L-125.2 514.6L-123.7 513.5L-120.8 513.8L-118.5 514.0L-116.6 514.0L-115.9 512.2L-115.8 510.6L-115.9 509.5L-116.8 508.2L-117.7 507.4L-119.7 506.7L-119.9 505.8L-118.0 505.1L-116.4 505.5L-116.6 503.6L-115.9 504.1L-114.4 503.9L-112.8 502.9L-112.4 501.5L-110.8 500.7L-109.9 499.5L-109.1 497.6L-107.6 496.8L-106.5 496.5L-104.7 496.1L-104.5 495.1L-105.0 493.9L-105.2 492.7L-105.2 490.7L-104.6 489.5L-102.3 488.2L-102.5 490.7L-103.0 492.7L-103.5 493.9L-103.0 494.9L-101.8 495.7L-100.5 495.3L-99.0 494.9L-98.1 495.9L-96.1 495.1L-93.8 494.1L-92.9 494.9L-91.7 494.9L-91.5 493.9L-90.3 492.7L-90.3 490.1L-89.6 488.4L-88.0 489.7L-86.7 489.3L-86.4 486.9L-87.5 485.8L-87.5 485.0L-86.0 484.3L-84.0 484.1L-82.3 484.3L-79.7 483.4L-81.1 482.7L-81.7 481.8L-83.4 482.0L-85.7 482.7L-88.0 483.4L-89.2 482.0L-90.0 479.7L-90.1 476.1L-88.6 474.0L-86.3 471.4L-85.3 470.9L-86.7 468.7L-89.0 469.0L-90.0 471.7L-90.9 474.0L-93.2 476.1L-94.6 477.8L-94.7 480.9L-94.6 481.8L-93.2 482.7L-93.2 484.7L-94.9 486.3L-95.5 488.6L-95.9 490.7L-96.3 491.5L-97.8 491.7L-98.2 492.9L-99.5 492.9L-99.9 491.3L-100.7 488.6L-100.8 488.2L-101.6 485.4L-102.2 483.4L-102.7 485.0L-103.9 486.1L-105.3 487.4L-106.5 487.6L-107.9 485.8L-108.5 482.3L-108.8 479.7L-108.2 478.0L-107.0 476.8L-105.3 475.0L-103.3 474.0L-101.8 471.4L-100.1 468.1L-99.0 465.3L-97.9 464.4L-96.7 461.7L-95.5 459.9L-92.6 457.0L-90.3 456.0L-88.0 454.3L-84.8 452.3L-82.3 453.0L-80.6 454.3L-78.8 455.0L-80.0 456.7L-77.7 456.7L-76.0 458.3L-73.1 459.3L-70.8 461.4L-67.9 463.5L-67.1 465.9L-68.5 467.6L-70.8 467.6L-74.2 466.7L-77.1 465.0L-76.0 466.7L-74.5 469.5L-74.5 472.5L-72.5 473.5L-70.8 472.7L-71.3 470.9L-67.9 471.9L-68.5 469.5L-66.2 467.0L-63.6 468.1L-63.9 465.3L-64.4 460.8L-61.6 462.3L-61.6 465.3L-60.4 465.3L-58.7 463.2L-57.0 461.7L-53.5 460.2L-51.8 461.4L-48.3 460.2L-46.6 460.2L-44.9 458.3L-44.9 456.7L-40.3 459.3L-38.0 461.4L-36.2 461.4L-35.7 457.7L-37.4 456.0L-37.7 452.6L-35.7 449.1L-35.1 445.3L-33.9 444.1L-31.1 446.1L-31.1 452.6L-30.5 457.7L-30.5 462.3L-32.2 466.2L-30.5 466.7L-28.8 462.3L-28.2 456.0L-29.3 450.9L-28.2 447.2L-25.9 447.2L-24.7 449.1L-22.4 449.1L-20.1 450.9L-18.4 455.4L-19.0 450.9L-21.9 443.3L-17.8 442.1L-14.4 437.9L-14.4 436.2L-9.8 433.9L-5.2 432.1L-0.6 430.2L1.7 427.7L5.5 424.1L7.5 425.6L9.8 429.2L14.4 430.2L16.1 433.5L15.6 439.2L12.1 441.3L8.6 444.1L12.1 442.5L15.6 442.1L16.7 442.9L21.3 443.3L23.6 445.3L27.1 445.3L28.2 442.5L31.7 443.3L34.0 445.3L34.5 449.1L34.0 452.6L36.3 452.6L38.0 449.8L38.6 450.9L40.9 450.5L43.2 451.2L45.5 447.9L47.4 445.7L50.1 446.4L53.5 447.6L58.1 450.5L59.3 451.6L61.6 452.6L65.0 452.6L68.5 453.3L70.8 457.3L73.1 457.0L76.6 457.7L78.9 456.0L81.2 459.3L81.7 455.7L84.6 456.7L88.1 457.0L90.4 458.0L92.7 459.3L96.1 461.4L98.4 463.8L101.9 465.3L104.5 467.9L103.6 469.5L101.3 472.2L100.5 472.5L97.8 471.4L96.1 469.5L93.8 468.1L92.7 470.9L89.8 471.7L91.7 477.8L89.2 477.3L85.8 479.0L83.5 480.9L81.5 483.4L78.9 482.0L76.6 483.2L75.4 483.2L73.7 483.6L73.1 486.5L72.5 488.0L73.4 491.3L72.0 493.7L69.7 497.2L68.2 497.6L67.7 499.5L65.9 501.5L65.0 499.5L64.6 495.7L64.7 491.7L66.0 488.6L67.9 486.5L69.4 484.3L71.7 482.3L73.7 479.0L74.8 477.5L72.5 479.5L70.0 479.0L69.7 481.3L67.3 479.0L65.9 479.7L63.9 483.2L63.3 484.3L59.1 484.3L57.0 483.9L53.5 484.7L50.1 484.7L47.2 487.6L44.9 490.1L43.2 493.7L41.5 494.3L43.8 496.1L46.1 495.3L48.1 497.0L47.8 497.6L48.2 499.1L47.4 501.3L47.1 504.8L45.5 508.2L44.3 509.8L42.0 512.2L40.9 514.0L37.4 514.4L36.3 515.2L35.9 515.7L34.9 516.9L34.8 517.9L32.8 519.1L32.2 519.9L32.2 520.3L33.3 521.3L34.4 523.5L34.5 524.9L34.1 526.1L32.8 526.6L31.1 527.1L30.9 525.6L31.2 523.5L31.2 522.8L29.9 522.5L29.1 521.9L29.7 519.9L28.7 519.1L27.1 519.7L25.3 520.8L25.9 518.4L24.8 517.8L23.1 519.3L21.1 520.6L22.2 522.1L22.5 523.2L24.5 522.3L26.5 522.9L24.8 524.0L24.0 524.7L22.7 526.3L24.0 527.2L24.6 529.0L25.7 530.6L25.7 531.4L24.8 532.2L25.9 533.0L25.5 534.9L24.2 536.6L23.1 538.1L22.2 539.4L21.4 540.0L20.2 541.3L19.8 541.5L17.9 542.2L16.9 542.7L15.6 543.1L13.8 543.7L12.7 544.1L12.4 545.2L11.9 544.3L10.9 543.6L10.4 543.6L9.8 543.7L8.4 544.6L7.5 546.1L7.3 547.0L8.1 548.2L9.2 549.5L10.1 550.3L10.9 552.0L11.3 553.8L11.2 555.2L9.8 556.3L8.6 556.8L8.1 557.7L6.7 558.8L6.1 558.9L6.3 557.3L5.8 556.8L4.6 556.6L4.0 555.8L3.2 554.7L1.7 554.1L1.2 553.2L0.6 553.8L0.6 555.0L0.0 556.1L-0.3 556.7L0.4 558.1L0.9 559.0L1.2 560.5L2.3 560.9L3.1 561.6L4.5 563.5L4.5 564.7L5.2 565.8L5.5 567.1L5.0 567.2L4.4 566.8L3.1 566.2L2.1 565.3L1.3 563.9L0.9 562.5L0.8 561.4L0.2 560.7L-0.6 559.9L-1.4 559.7L-1.4 558.4L-1.1 557.3L-1.0 555.5L-1.0 554.4L-1.5 552.6L-2.1 550.9L-2.2 549.7L-3.1 549.1L-3.8 549.6L-4.8 550.5L-6.0 550.3L-5.7 548.5L-6.1 547.0L-6.9 545.8L-7.6 545.4L-8.3 544.3L-8.8 542.7L-9.8 542.5L-10.3 543.1L-11.5 543.3L-12.6 543.5L-13.2 543.3L-14.4 543.7L-14.6 544.9L-15.8 545.8L-16.7 546.5L-17.8 547.6L-18.6 548.3L-19.8 549.6L-21.0 550.4L-22.1 550.9L-22.3 552.6L-22.1 553.7L-22.5 555.2L-22.7 556.9L-23.4 558.1L-24.5 558.5L-25.3 559.4L-26.0 559.0L-26.8 557.3L-27.3 555.8L-28.4 553.9L-29.6 550.9L-30.1 549.1L-30.7 546.7L-30.8 544.9L-30.7 544.3L-30.9 542.8L-31.5 544.1L-32.8 544.7L-33.9 544.3L-34.4 543.6L-35.1 542.7L-33.6 542.0L-35.1 542.1L-35.7 541.5L-36.0 541.0L-36.9 540.6L-37.4 539.6L-38.0 538.9L-40.3 539.1L-42.8 539.3L-43.7 539.3L-44.8 539.0L-46.6 538.9L-48.0 538.5L-48.9 537.1L-49.7 536.6L-51.2 537.2L-52.4 537.4L-54.1 536.2L-56.0 534.4L-56.7 533.0L-58.1 532.5L-58.6 533.1L-59.3 533.8L-58.7 534.9L-58.1 536.2L-57.0 537.2L-56.7 538.6L-56.0 539.6L-56.0 538.8L-55.6 538.0L-55.1 539.0L-55.3 539.9L-54.1 540.4L-51.9 540.0L-50.9 539.0L-49.9 538.0L-49.6 537.8L-49.6 539.4L-49.1 540.4L-47.1 541.1L-45.7 542.5L-46.6 543.8L-47.2 545.0L-48.0 546.7L-49.5 547.9L-50.9 548.4L-52.4 549.1L-54.4 550.3L-55.8 551.2L-58.1 552.2L-59.8 553.1L-62.7 554.0L-64.4 554.1L-64.8 553.2L-65.1 551.5L-65.5 549.7L-65.6 549.2L-67.1 547.0L-68.5 545.2L-69.5 543.7L-70.2 541.9L-70.8 540.5L-71.9 538.8L-72.5 537.9L-73.6 536.2L-74.5 535.5L-74.2 533.7L-75.0 535.8L-76.0 535.1L-77.0 533.1L-77.3 531.3L-75.1 531.3L-74.5 530.2L-74.2 529.3L-73.6 527.8L-73.3 525.6L-72.8 524.0L-73.6 524.0L-74.7 523.8L-76.0 524.7L-76.8 524.9L-79.2 523.6L-80.6 524.6L-81.9 523.8L-83.0 523.5L-83.7 521.5L-84.2 520.2L-84.4 519.1L-82.9 518.5L-81.1 518.5L-80.1 518.1L-81.1 517.6L-81.0 517.3L-78.6 517.5L-77.9 516.9L-74.0 516.1L-72.7 517.2L-68.8 517.6L-66.6 516.7L-66.5 515.8L-67.3 514.6L-68.8 513.7L-71.0 511.9L-72.4 511.1L-71.6 511.0L-70.8 509.8L-70.4 508.7L-69.3 507.9L-70.8 508.0L-71.3 508.0L-72.2 508.7L-73.9 509.3L-74.2 510.3L-72.5 510.8L-73.8 511.4L-75.1 512.2L-76.1 512.1L-77.1 511.0L-75.8 509.8L-77.1 509.7L-78.3 508.8L-79.2 509.0L-80.3 511.0L-81.5 512.7L-82.4 514.3L-82.9 515.4L-82.3 516.3L-81.1 517.2L-81.2 517.6L-82.9 517.6L-83.8 518.5L-84.4 519.0L-84.6 518.2L-84.7 517.9L-86.4 517.8L-86.9 519.1L-87.5 518.8L-88.2 518.2L-88.5 519.1L-88.0 520.2L-86.9 521.8L-87.2 522.2L-86.9 522.5L-87.8 522.9L-87.8 524.2L-88.6 524.2L-89.5 523.8L-90.0 522.5L-89.5 521.8L-90.3 521.6L-90.7 520.8L-91.5 519.6L-92.2 518.5L-92.2 517.2L-92.4 516.3L-93.2 515.5L-93.7 515.2L-95.6 513.8L-97.0 512.9L-97.9 511.0L-98.9 511.6L-98.6 510.5L-100.4 510.8L-100.1 511.6L-100.0 512.9L-99.0 513.7L-98.2 515.4L-95.9 516.3L-95.1 517.5L-93.8 518.2L-93.2 519.0L-93.3 519.4L-94.7 518.4L-95.4 519.0L-95.5 519.6L-94.8 520.5L-95.4 520.9L-96.0 522.2L-96.6 521.9L-96.3 521.0L-96.0 520.6L-96.6 519.1L-97.5 518.1L-98.2 517.9L-99.0 517.3L-100.5 516.6L-101.8 515.5L-102.4 514.6L-102.7 513.8L-103.2 512.9L-104.3 512.4L-105.1 513.0L-106.1 513.5L-107.6 514.4L-108.3 514.1L-109.2 514.0L-110.5 514.1L-111.1 515.4L-110.7 515.7L-112.0 517.0L-113.1 517.5L-113.6 518.1L-114.9 519.9L-114.3 521.0L-115.1 521.6L-115.5 522.6L-117.0 523.9L-117.4 523.8L-119.6 523.9L-120.7 524.7L-121.0 524.9L-121.8 524.2L-122.6 523.2L-123.7 523.5L-124.9 523.5ZM90.9 452.3L92.7 450.9L95.5 451.9L93.8 453.3L91.5 453.3Z" fill="#fcba82" stroke="#e19b66" stroke-width="0.5" stroke-linejoin="round"/><path d="M355.1 509.8L356.8 509.0L358.6 508.2L359.7 508.5L360.9 508.7L361.1 511.0L358.8 511.4L357.7 512.1L358.4 512.7L358.8 513.7L360.3 514.9L360.7 516.4L361.4 517.6L360.9 519.1L361.8 520.3L361.9 522.8L362.0 523.5L359.7 524.0L358.0 523.6L356.8 522.8L356.1 521.5L356.1 520.9L356.6 520.2L357.9 518.5L356.8 518.1L356.0 516.4L355.4 516.0L354.6 514.6L354.5 513.0L353.6 512.1L353.9 510.6L355.1 509.8ZM194.0 508.7L196.3 506.8L198.0 505.8L200.9 506.7L202.2 508.4L202.6 509.0L199.7 509.0L198.0 508.2L196.3 508.8L194.0 508.7ZM199.0 516.6L200.3 516.4L200.6 514.6L200.4 512.2L201.7 511.1L202.0 510.2L200.3 510.0L199.1 511.4L198.8 513.8L199.0 516.6ZM202.6 509.8L204.3 509.7L206.0 509.8L207.8 511.0L208.0 511.8L206.6 512.1L205.8 513.8L205.0 514.6L204.5 513.0L203.7 513.5L204.0 511.4L202.6 510.3ZM203.9 516.6L205.5 516.9L207.8 515.8L209.0 514.9L207.8 515.2L206.0 515.2L204.3 516.0ZM208.1 514.1L210.1 514.0L212.0 513.7L212.0 512.7L210.6 513.0L208.9 513.4Z" fill="#fff" stroke="#e19b66" stroke-width="0.4"/><g clip-path="url(#lc)"><path d="M313.9 575.3L314.8 573.9L316.4 574.2L318.2 573.1L318.5 571.1L320.2 569.2L320.5 567.5L321.3 564.7L321.3 563.8L322.3 562.9L323.6 563.7L325.6 564.0L326.8 563.4L327.9 562.9L329.0 563.0L331.4 562.9L332.5 563.8L333.8 563.4L335.3 564.7L335.3 566.0L335.9 566.3L334.3 567.7L333.9 569.2L333.9 570.2L333.2 571.7L333.6 573.6L333.8 575.5L335.2 578.0L333.1 578.3L332.7 579.2L332.9 580.7L332.7 582.2L333.3 582.8L334.1 582.6L334.1 584.0L332.5 582.9L331.2 581.9L330.8 582.3L329.1 581.9L327.9 581.6L327.5 581.1L325.4 581.4L325.5 580.6L325.2 579.9L324.9 576.9L323.4 576.9L322.9 576.6L322.3 576.6L322.2 577.7L320.1 577.9L319.3 576.9L319.0 575.3L315.3 575.3L313.9 575.3ZM318.4 566.2L317.1 564.2L316.5 563.0L316.7 561.6L317.7 560.1L319.4 559.9L321.3 559.6L321.7 558.4L323.3 558.3L324.8 556.6L326.2 556.1L327.0 557.4L326.9 558.8L328.0 559.3L328.7 560.1L330.2 561.2L331.4 562.9L329.0 563.0L327.9 562.9L326.8 563.4L325.6 564.0L323.6 563.7L322.3 562.9L321.3 563.8L321.3 564.7L320.0 564.6L319.0 564.7L318.4 566.2ZM327.4 558.8L328.0 559.3L328.7 560.1L330.2 561.2L331.4 562.9L332.5 563.8L333.8 563.4L335.3 564.7L336.6 564.6L337.8 564.2L339.0 563.9L340.5 563.4L341.2 563.4L341.2 562.6L339.8 561.0L337.8 559.8L339.1 558.9L339.1 557.8L338.9 557.0L338.1 556.5L337.9 554.7L337.5 555.0L337.0 555.3L337.1 556.0L336.0 557.5L335.3 557.6L334.3 556.9L333.2 557.7L332.1 558.0L330.9 557.7L330.4 557.7L329.5 556.8L328.7 556.9L328.0 558.4L327.4 558.8ZM341.9 552.3L342.4 549.1L344.2 547.9L345.0 549.9L345.7 551.1L347.0 552.0L348.8 553.8L349.5 554.1L348.7 554.4L346.8 552.5L344.7 551.9L343.5 551.6L341.9 552.3ZM291.2 563.7L291.3 562.1L290.1 561.3L290.3 560.0L290.8 559.0L290.9 558.0L290.6 557.0L291.9 556.9L292.7 556.6L293.5 556.8L294.4 557.5L296.2 557.4L296.6 558.0L296.7 559.7L296.2 560.9L296.6 562.9L295.8 562.9L295.2 562.6L292.9 563.1L291.2 563.7ZM310.9 567.5L311.1 566.0L312.9 566.2L312.9 567.5L310.9 567.5ZM323.0 515.2L323.6 514.3L324.6 514.8L324.7 515.7L323.7 516.3L323.0 515.2Z" fill="#f0f0f0" stroke="#e2e2e2" stroke-width="0.4"/><path d="M137.6 457.3L137.6 482.5L139.9 483.0L141.6 485.6L143.9 483.9L146.3 486.7L148.1 490.5L150.2 491.7L150.0 493.7M157.9 504.8L190.3 504.8L191.0 505.3L194.0 506.0L196.3 506.3L198.1 506.0L202.2 508.4L202.6 509.0L203.7 509.8L204.9 511.0L205.0 514.6L204.2 516.0L204.9 516.6L208.9 514.9L208.8 514.1L211.5 513.7L212.0 512.7L213.5 511.4L217.6 511.4L218.4 510.8L219.0 509.3L220.2 507.5L221.4 507.7L221.8 508.0L221.8 510.3L222.3 511.3L222.7 511.8M165.1 529.7L167.8 529.4L172.1 531.3L175.3 531.3L175.3 530.6L177.3 530.6L179.1 532.2L179.6 533.5L181.2 534.3L181.9 533.3L183.1 533.3L184.4 535.2L185.3 536.2L185.8 537.6L188.0 538.3M193.7 552.0L193.7 551.1L194.3 550.2L195.8 550.2L194.6 548.9L195.1 548.2L197.2 548.2L198.2 547.3M197.2 548.2L197.2 550.4L198.3 550.6M197.2 550.4L197.1 552.2L196.1 552.9M197.1 552.2L198.8 552.7L198.8 553.4M199.4 553.8L200.1 552.9L202.0 551.9L204.1 551.5M201.2 556.0L202.4 556.1L203.5 556.2M204.4 557.7L204.4 559.4M217.8 555.2L215.9 556.7L216.5 559.1L217.0 560.7L219.2 560.7L220.0 561.7L222.2 561.6L221.8 563.5L222.4 566.0L222.8 567.3M222.8 567.3L219.5 566.7L219.5 567.4L220.2 567.5L220.0 569.9L219.4 573.4L218.5 573.0L215.9 571.4L214.7 569.8L213.2 568.8L212.0 568.2L210.3 567.7L209.2 567.1M213.2 568.8L212.8 570.5L211.6 571.6L209.8 572.5L208.9 574.3L207.4 572.5M219.4 573.4L215.9 574.5L214.8 577.1L215.9 579.0L216.7 580.0L218.6 579.5L218.6 581.2L219.7 581.1L220.8 582.9L220.4 584.2L220.1 585.8L220.4 587.2L219.9 588.8L218.9 589.7M219.9 588.8L221.0 591.2L221.4 593.6L222.5 595.2L222.7 596.7M219.7 581.1L221.2 581.2L224.7 579.8L224.6 581.9L225.7 582.8L227.6 583.5L230.2 584.4L230.6 587.4L232.7 587.4L232.9 588.7L233.7 589.6L232.9 591.5L233.0 591.9L233.2 594.3L235.6 594.6L237.0 596.7M222.5 595.2L227.8 594.5L228.7 595.7L232.9 591.5M222.8 567.3L224.5 567.7L226.0 567.0L226.9 566.0L225.8 564.0L227.5 564.5L230.0 562.8L229.2 562.0L230.8 559.2M230.0 562.8L231.0 563.7L231.1 566.0L231.9 567.2L234.8 566.5L237.1 566.0L239.0 566.2L240.3 564.0M234.0 561.8L233.1 564.1L234.8 566.5M237.7 562.2L237.1 566.0M297.3 526.1L297.9 528.1L298.5 530.1L295.6 531.8L293.5 533.4L289.8 534.7L289.8 536.0L284.7 536.0M289.8 536.0L289.8 538.1L286.0 538.1L286.0 541.3L284.9 541.9L284.8 543.9L280.3 543.9M289.8 536.5L294.3 539.4L292.4 539.4L293.4 549.7L293.7 550.9L289.1 550.9L287.3 551.3L286.3 551.7L285.8 551.7M294.3 539.4L301.2 544.2L303.6 546.7L304.7 546.6L306.5 546.1L313.7 541.3L310.8 537.6L311.2 536.2L311.1 534.3L310.8 532.7L309.4 529.7L308.7 527.4L309.3 526.3L309.4 524.9L309.7 523.6M310.8 532.7L311.7 531.8L311.6 530.6L313.1 529.8L313.1 528.7M328.6 530.9L328.6 543.1L328.6 545.5L327.5 545.5L327.5 546.1L318.2 541.4L317.1 541.9L316.2 542.4L313.7 541.3M328.6 543.1L342.3 543.1M317.1 541.9L317.7 544.3L317.8 545.6L317.7 549.2L315.5 553.0M327.5 546.1L327.5 550.6L326.2 550.8L325.6 552.6L325.4 554.1L326.2 556.1M304.7 546.6L304.7 549.7L303.9 551.0L301.0 551.5L300.1 551.6L297.5 552.4L295.2 553.6L293.7 555.2L293.5 556.8M304.0 555.3L304.6 553.2L307.8 553.7L310.2 554.0L313.7 553.6L315.5 553.0L316.1 553.7L316.7 555.5L315.0 557.8L313.4 560.7L311.9 560.7L310.2 562.4L309.7 563.3M304.0 555.3L304.1 557.3L303.0 559.6L303.0 561.4M316.1 553.7L317.5 557.3L316.0 557.4L317.7 560.1M341.9 552.3L341.4 554.1L340.3 555.2L340.0 556.3L339.3 556.6L339.1 557.8M341.2 563.4L342.3 563.7L343.7 564.6L345.3 564.8L346.8 563.9L348.1 564.2L349.2 563.8L351.6 563.0L355.1 559.6L353.9 559.6L350.5 558.4L349.3 556.1L348.0 556.1L348.7 554.4M349.3 556.1L349.6 555.5M348.1 564.2L347.0 565.5L347.0 569.7L347.7 570.6M339.0 563.9L339.6 564.7L340.1 566.7L338.9 568.5L338.9 569.8L343.1 572.0L343.4 572.7L345.0 574.0M333.9 569.8L335.0 569.8L338.9 569.8M333.2 571.7L335.0 571.4L335.0 569.8M333.6 573.6L335.3 572.4L335.0 571.4M340.0 581.9L343.0 582.0L346.4 580.5M335.2 578.0L337.7 579.3L339.0 579.5L340.0 581.9L339.4 585.1L341.1 587.0L340.5 588.3L339.4 587.4L339.6 585.4L338.1 584.7M327.5 581.1L327.5 583.5L325.2 583.5L325.2 587.2L326.8 588.9L329.0 589.1L330.9 589.4L332.1 587.6L334.8 586.5L334.6 585.6L338.1 584.7L337.7 584.1L337.8 582.9L338.2 581.2L337.7 579.3M313.4 588.6L316.0 588.7L321.1 588.7L324.5 589.4L326.8 588.9M334.8 586.5L335.9 587.0L337.7 587.8L337.8 589.4L337.5 590.6L337.7 591.9L337.1 593.4L335.9 594.7M329.0 589.1L329.8 591.2L331.7 592.4L333.7 594.5L335.9 594.7M324.0 589.7L324.0 594.2L322.9 594.2L322.9 597.9M312.6 573.1L313.5 572.4L314.2 571.4L316.4 571.3L316.2 570.2L315.8 568.4L316.5 567.1L315.2 567.2L315.0 566.2M311.1 566.0L315.0 566.2L318.4 566.2M301.2 561.7L300.4 560.1L300.3 557.8L299.7 556.0L296.6 556.1L296.6 558.0M301.7 561.6L301.7 558.4L300.8 556.8L300.9 556.1L299.7 556.0M300.9 556.1L302.6 554.7L304.0 555.3M300.1 551.6L300.9 553.1L302.4 554.5L302.6 554.7M280.9 550.3L283.4 549.6L284.9 550.9L285.8 551.7L286.7 554.5L289.1 554.5L290.3 556.0L290.6 557.0M286.7 554.5L284.1 554.3L282.4 554.1L280.6 554.5M280.5 553.1L282.6 552.9L284.0 553.3L282.6 553.6L280.5 553.7M282.6 556.1L284.1 555.3L284.1 554.3M284.5 558.4L285.5 557.4L287.0 557.3L288.0 559.0L289.0 560.2L290.3 560.0M286.6 560.8L288.0 559.0M289.7 516.3L290.4 516.1L292.3 516.3L292.7 516.7L291.9 517.6L291.8 519.6L291.2 519.7L291.8 521.8L291.3 523.2M297.8 514.0L300.7 514.9L303.5 515.5M308.5 513.4L307.8 512.2L307.9 510.0L306.9 509.5L307.9 507.5L308.6 507.2L309.3 504.8L307.2 503.9L306.5 503.9L305.4 503.1L302.7 501.1M307.9 510.0L309.6 509.3L310.2 510.2L311.9 508.4L313.9 508.2L315.6 509.0L315.7 510.5M308.6 507.2L309.6 506.8L310.9 507.4L311.9 508.4M303.8 500.6L305.6 500.6L306.5 500.9L306.8 501.6L306.8 499.8L307.9 498.9L308.1 497.0M306.8 501.6L307.2 503.9M316.3 495.9L316.8 499.5L316.7 501.3L317.1 501.3L313.8 502.5L315.7 505.1L314.8 507.4L310.9 507.4M309.9 493.9L311.2 494.1M322.6 494.9L326.1 494.9L326.9 495.9L327.4 498.2L326.6 498.9L327.0 500.4L327.6 501.6L325.9 504.6L321.6 503.9L317.1 501.3M315.7 505.1L317.1 504.8L319.4 505.5L321.6 503.9M319.4 505.5L319.6 506.5L318.4 508.4L315.6 509.0M327.0 500.4L330.9 499.8L335.1 500.7L336.5 499.3L339.4 500.9L340.8 502.3L343.6 503.2L346.0 503.8L345.7 506.7L343.8 508.0M336.5 499.3L335.9 497.4L337.5 496.6L335.4 492.5L332.3 491.5L331.7 489.1L331.4 488.6L332.1 484.3M326.9 495.9L329.5 493.9L330.5 492.3L332.3 491.5M324.1 491.5L330.5 492.3M327.8 487.8L331.4 488.6M326.1 494.9L326.0 493.7L324.3 493.1M331.8 482.0L336.2 476.3L334.4 473.5L333.9 471.1L334.5 469.0L333.2 465.6L334.4 463.2L332.9 459.6L333.1 458.9L335.3 456.7M333.1 458.9L332.1 456.0L329.8 457.0L329.4 458.6L327.1 459.9L323.6 459.1L327.1 462.6L327.0 464.7L327.6 468.7M323.6 459.1L320.7 460.8L318.3 465.3L316.5 467.9L315.6 471.9L313.9 476.1L313.7 479.2L314.2 483.0L313.1 485.4M325.9 504.6L326.2 506.5L328.5 507.0L330.5 506.0L332.3 506.2L333.5 507.4L334.5 509.2L332.3 510.6L334.0 511.1M330.5 506.0L332.3 510.6M318.4 508.4L319.6 506.5L321.6 506.8L323.4 505.7L325.3 505.8L326.2 506.5L324.3 509.7L321.5 510.0L318.8 509.0L318.4 508.4M326.0 512.7L329.2 513.5L330.9 512.9L332.8 513.5M324.3 509.7L324.5 511.8L326.0 512.7L325.6 515.7L326.2 517.2L328.0 516.9L330.2 516.6L332.1 516.1M330.2 516.6L329.8 517.9M322.9 519.6L324.0 517.9L326.2 517.2M322.2 516.3L323.0 515.2L321.9 513.8L321.7 511.6L321.5 510.0M324.0 517.9L323.4 516.3L323.7 516.3L325.6 515.7M315.6 509.0L318.8 509.0M315.5 510.6L317.5 510.6L318.3 511.4L321.7 511.6M318.3 511.4L320.1 514.6L321.1 515.4M321.9 513.8L323.6 514.3M322.2 516.3L323.4 516.3M341.2 525.0L342.0 524.6L342.1 523.8L343.6 523.8L345.9 523.8L348.7 523.3L351.4 523.2L350.6 520.0L351.4 519.6M347.7 516.9L349.9 517.5L350.1 519.0L351.4 519.6L353.4 520.8L355.1 519.7L356.1 521.5M345.9 514.0L348.8 514.3L351.1 515.1L353.3 516.3L354.9 517.3L355.7 516.4M349.9 517.5L351.6 517.2L353.4 517.5L353.3 516.3M351.6 517.2L352.3 518.5L353.4 519.9L353.4 520.8M348.7 523.3L347.0 527.1L344.5 528.5L342.2 530.0L340.9 529.4M344.5 528.5L345.0 530.1L342.4 531.0L343.6 532.3L343.0 533.0L341.4 534.0L340.1 533.8M339.2 531.3L340.0 533.7M340.9 529.4L340.7 531.0L340.1 533.7M340.3 528.9L340.9 528.7L341.9 527.4L341.3 526.8M345.0 530.1L346.4 530.5L348.3 531.6L351.3 534.0L353.4 534.2L354.5 534.3L354.5 534.9L355.6 534.9M353.4 534.2L354.4 532.9L355.1 533.0M351.4 523.2L352.1 524.9L353.0 526.1L352.1 527.7L352.8 529.0L354.8 530.5L354.8 531.7L355.8 533.1M349.1 549.8L349.6 548.6L351.0 548.6L353.3 548.9L354.5 549.0L356.4 547.2L359.7 546.7L363.2 545.5L364.0 543.1L363.4 542.2L360.4 542.0L359.2 540.5M363.4 542.2L364.1 540.4L364.7 539.5M359.7 546.7L361.0 549.6M358.3 539.6L358.8 539.9M361.9 523.1L365.7 521.8L368.1 522.8L370.3 524.0L369.5 528.1L369.9 531.0L371.0 531.7L369.9 533.3L372.1 535.3L372.7 536.6L370.8 539.1M369.9 533.3L371.8 533.8L376.2 533.1L376.3 531.7L379.6 530.5L379.8 529.0L381.7 527.2L382.3 524.5L386.1 523.2M370.3 524.0L374.1 524.5L376.4 522.9L378.1 523.5L379.8 522.6L382.1 522.2L382.3 523.9L386.1 523.2M360.3 516.4L362.9 516.1L364.3 517.2L365.5 517.2L367.3 514.9L368.9 515.8L371.1 517.5L374.5 520.8L376.4 522.9M364.3 517.2L364.3 511.4L367.2 510.5L370.2 512.4L371.2 513.8L374.5 513.5L375.9 514.6L375.8 516.1L378.2 517.6L381.3 516.1L381.8 515.8L384.4 515.4L385.0 514.3L390.9 514.9L392.2 515.8L392.2 511.4L394.8 511.1L398.3 508.0L398.6 505.8L400.3 504.5M378.2 517.6L381.0 518.8L383.9 517.9L381.8 515.8M377.9 523.2L378.6 521.8L377.4 520.3L381.0 518.8L384.7 520.0M392.2 515.8L388.4 517.6L384.7 520.0L386.2 521.3L386.1 523.2M400.3 504.5L397.9 503.8L395.4 501.3L391.9 501.6L389.5 497.0L385.0 496.5L384.3 495.7L381.6 495.3L381.5 493.1L378.3 493.7L375.2 494.5L370.4 495.9L370.1 497.8L368.9 501.3L370.8 500.9L368.3 502.2L364.0 502.0L362.6 501.3L359.0 500.2L358.3 500.0L355.8 502.0L353.8 504.3L353.7 505.8L355.9 508.0L356.4 509.2M400.9 504.5L406.0 501.6L408.7 503.1L413.0 502.2L412.6 500.0L417.5 500.7L417.4 502.3L422.9 502.5L424.7 504.3L427.3 504.6L431.4 502.5L434.2 503.4L432.8 506.3L434.9 507.0L437.7 508.7L435.0 509.2L433.1 510.6L428.6 511.3L428.5 513.5L425.5 515.4L420.7 516.7L415.9 515.1L410.7 515.1L409.5 512.7L404.5 511.0L404.1 507.4L401.1 505.5L400.9 504.5M434.2 503.4L437.2 502.5L438.8 498.5L438.0 497.0L442.1 496.6L444.9 498.0L446.7 503.4L450.2 505.0L450.6 507.0L455.0 505.8L453.0 511.3L451.0 513.0L450.2 515.5L447.2 516.1L445.9 516.4L443.0 519.0M445.7 522.3L447.6 521.2M424.2 543.7L422.5 542.0L421.1 541.5L417.5 542.6L416.3 544.1L415.0 543.5L414.0 543.0L413.7 540.5L412.2 540.6L413.5 536.2L412.0 535.2L410.6 533.9L408.7 533.9L405.9 535.8L405.4 535.8L403.1 535.3L402.1 536.5L401.3 535.7L398.8 535.6L396.5 534.4L394.2 532.6L393.2 532.7L390.5 531.2L390.8 529.7L390.7 527.2L389.4 525.6L387.3 525.0L386.1 523.2M401.4 537.6L397.7 537.4L395.7 536.4L392.0 534.6L393.2 532.7M401.3 535.7L401.4 537.6M402.1 536.5L402.3 537.1L405.9 537.1L405.9 535.8M378.3 541.0L381.6 540.1L379.8 536.9L382.6 535.6L384.4 533.0L385.5 530.8L386.6 530.0L385.6 529.0L385.0 526.7L389.4 525.6M402.3 543.1L402.1 540.4L401.3 538.4L403.2 538.1L403.2 539.0L406.3 539.4L404.8 540.6L405.4 541.9L406.4 543.2L406.1 544.7M406.4 543.2L407.2 540.5L408.8 538.8L409.4 537.1L411.6 536.7L412.0 535.2M415.1 545.0L412.6 545.9L412.4 548.4L413.7 549.9L412.9 551.3L414.0 553.6L414.4 555.5L413.5 557.0M416.3 544.1L415.1 545.0L416.3 546.1L416.1 548.5L417.4 547.8L419.6 547.6L420.5 549.8L421.4 552.2L418.4 552.4L417.8 553.2L418.3 555.3M417.5 542.6L419.6 545.0L419.4 546.4L420.9 547.4L422.4 549.1L423.7 551.2L423.6 551.8L423.6 554.4L421.7 555.3L420.8 556.2L420.0 556.8M421.4 552.2L423.6 551.8M415.1 561.3L416.2 562.2L417.4 561.6M426.0 566.4L427.0 567.6L429.0 567.0L431.6 567.0L432.2 565.5L432.9 564.2L433.4 563.8L435.6 563.9M431.2 563.4L432.2 563.8L432.6 563.0M462.1 571.6L462.1 579.0M442.6 579.3L443.7 578.9L444.0 579.2" fill="none" stroke="#e19b66" stroke-width="0.5" stroke-linejoin="round"/></g></g></svg></div>
<div class="card" id="c4" style="left:537px;top:341px;height:300px"></div>
<div id="topbar"></div>
<div id="navbar"></div>
<div class="abs" style="left:1011px;top:0;width:13px;height:595px;background:#f1f1f1"></div>
<div class="abs" style="left:1012px;top:91px;width:10px;height:297px;background:#c1c1c1"></div>
<svg class="abs" style="left:1011px;top:0" width="13" height="595"><path d="M3 9 L6 5.5 L9 9 Z" fill="#505050"/><path d="M3 586.5 L6 590 L9 586.5 Z" fill="#505050"/></svg>
<div id="side"></div>
<div class="abs" style="left:0;top:55px;width:52px;height:1px;background:#23233f"></div>
<svg class="abs" style="left:19px;top:10.1px" width="11.6" height="31.7" viewBox="0 0 160 448" preserveAspectRatio="none"><path d="M77,0 C70,60 0,170 0,270 C0,360 40,420 77,448 C120,420 162,350 158,250 C155,180 120,110 100,80 C92,55 82,25 77,0 Z M128,128 C115,160 100,200 85,240 C65,290 54,330 57,365 C60,395 70,412 77,422 C90,405 106,375 108,340 C109,310 99,290 101,258 C103,225 116,180 131,140 Z" fill="#fb8823" fill-rule="evenodd"/></svg>
<svg class="abs" style="left:14.60px;top:61.10px;" width="19.2" height="19.2" viewBox="0 0 24 24"><path d="M9.5 3A6.5 6.5 0 0 1 16 9.5c0 1.61-.59 3.09-1.56 4.23l.27.27h.79l5 5-1.5 1.5-5-5v-.79l-.27-.27A6.52 6.52 0 0 1 9.5 16 6.5 6.5 0 0 1 3 9.5 6.5 6.5 0 0 1 9.5 3m0 2C7 5 5 7 5 9.5S7 14 9.5 14 14 12 14 9.5 12 5 9.5 5" fill="#fff"/></svg>
<div class="t" style="left:7.45px;top:85.82px;font-size:7.8px;line-height:9.36px;color:#fff;letter-spacing:-0.170px;">Advanced</div>
<svg class="abs" style="left:14.60px;top:107.10px;" width="19.2" height="19.2" viewBox="0 0 24 24"><path d="M12 3 1 9l11 6 9-4.91V17h2V9M5 13.18v4L12 21l7-3.82v-4L12 17z" fill="#fff"/></svg>
<div class="t" style="left:4.30px;top:131.82px;font-size:7.8px;line-height:9.36px;color:#fff;letter-spacing:0.031px;">Intelligence</div>
<svg class="abs" style="left:14.60px;top:153.10px;" width="19.2" height="19.2" viewBox="0 0 24 24"><path d="M19 3H5c-1.1 0-2 .9-2 2v14c0 1.1.9 2 2 2h14c1.1 0 2-.9 2-2V5c0-1.1-.9-2-2-2M9 17H7v-7h2zm4 0h-2V7h2zm4 0h-2v-4h2z" fill="#fff"/></svg>
<div class="t" style="left:8.90px;top:177.82px;font-size:7.8px;line-height:9.36px;color:#fff;letter-spacing:-0.076px;">Analytics</div>
<svg class="abs" style="left:14.60px;top:199.10px;" width="19.2" height="19.2" viewBox="0 0 24 24"><path d="M16 5v13h5V5M4 18h5V5H4m6 13h5V5h-5z" fill="#fff"/></svg>
<div class="t" style="left:5.10px;top:223.82px;font-size:7.8px;line-height:9.36px;color:#fff;letter-spacing:0.005px;">Collections</div>
<svg class="abs" style="left:14.60px;top:245.10px;" width="19.2" height="19.2" viewBox="0 0 24 24"><path d="M7.77 6.76L6.23 5.48.82 12l5.41 6.52 1.54-1.28L3.42 12l4.35-5.24zM7 13h2v-2H7v2zm10-2h-2v2h2v-2zm-6 2h2v-2h-2v2zm6.77-7.52l-1.54 1.28L20.58 12l-4.35 5.24 1.54 1.28L23.18 12l-5.41-6.52z" fill="#fff"/></svg>
<div class="t" style="left:3.35px;top:269.82px;font-size:7.8px;line-height:9.36px;color:#fff;letter-spacing:0.085px;">Integrations</div>
<svg class="abs" style="left:14.60px;top:507.70px;" width="19.2" height="19.2" viewBox="0 0 24 24"><path d="M12 4a4 4 0 0 1 4 4 4 4 0 0 1-4 4 4 4 0 0 1-4-4 4 4 0 0 1 4-4m0 10c4.42 0 8 1.79 8 4v2H4v-2c0-2.21 3.58-4 8-4" fill="#fff"/></svg>
<div class="t" style="left:16.40px;top:532.82px;font-size:7.8px;line-height:9.36px;color:#fff;letter-spacing:-0.289px;">User</div>
<svg class="abs" style="left:14.60px;top:553.50px;" width="19.2" height="19.2" viewBox="0 0 24 24"><path d="m15.07 11.25-.9.92C13.45 12.89 13 13.5 13 15h-2v-.5c0-1.11.45-2.11 1.17-2.83l1.24-1.26c.37-.36.59-.86.59-1.41a2 2 0 0 0-2-2 2 2 0 0 0-2 2H8a4 4 0 0 1 4-4 4 4 0 0 1 4 4 3.2 3.2 0 0 1-.93 2.25M13 19h-2v-2h2M12 2A10 10 0 0 0 2 12a10 10 0 0 0 10 10 10 10 0 0 0 10-10c0-5.53-4.5-10-10-10" fill="#fff"/></svg>
<div class="t" style="left:6.45px;top:578.92px;font-size:7.8px;line-height:9.36px;color:#fff;letter-spacing:-0.223px;">Resources</div>
<div id="search"><div class="abs" style="left:0;top:0;width:118px;height:36px;background:#1b1b36"></div><div class="abs" style="right:0;top:0;width:36px;height:36px;background:#1b1b36"></div></div>
<div class="t" style="left:84.50px;top:22.30px;font-size:9.4px;line-height:11.28px;color:#fff;letter-spacing:-0.154px;font-weight:bold;">All Communities</div>
<svg class="abs" style="left:171.30px;top:20.50px;" width="16.4" height="16.4" viewBox="0 0 24 24"><path d="M7.41 8.58 12 13.17l4.59-4.59L18 10l-6 6-6-6z" fill="#fff"/></svg>
<div class="t" style="left:218.00px;top:22.87px;font-size:8.8px;line-height:10.56px;color:#c0c0c0;letter-spacing:0.278px;font-style:italic;">Try searching for ...</div>
<svg class="abs" style="left:902.8px;top:21.6px" width="12.4" height="12" viewBox="0 0 12.4 12"><path d="M0.5 3.4V0.5H3.4M0.5 0.5L4 4 M9 0.5H11.9V3.4M11.9 0.5L8.4 4 M0.5 8.6V11.5H3.4M0.5 11.5L4 8 M11.9 8.6V11.5H9M11.9 11.5L8.4 8" stroke="#9c9c9c" stroke-width="1.1" fill="none"/></svg>
<svg class="abs" style="left:923.10px;top:19.50px;" width="16" height="16" viewBox="0 0 24 24"><path d="M11 18h2v-2h-2zm1-16A10 10 0 0 0 2 12a10 10 0 0 0 10 10 10 10 0 0 0 10-10A10 10 0 0 0 12 2m0 18c-4.41 0-8-3.59-8-8s3.59-8 8-8 8 3.59 8 8-3.59 8-8 8m0-14a4 4 0 0 0-4 4h2a2 2 0 0 1 2-2 2 2 0 0 1 2 2c0 2-3 1.75-3 5h2c0-2.25 3-2.5 3-5a4 4 0 0 0-4-4" fill="#939393"/></svg>
<svg class="abs" style="left:962.60px;top:19.40px;" width="19.2" height="19.2" viewBox="0 0 24 24"><path d="M9.5 3A6.5 6.5 0 0 1 16 9.5c0 1.61-.59 3.09-1.56 4.23l.27.27h.79l5 5-1.5 1.5-5-5v-.79l-.27-.27A6.52 6.52 0 0 1 9.5 16 6.5 6.5 0 0 1 3 9.5 6.5 6.5 0 0 1 9.5 3m0 2C7 5 5 7 5 9.5S7 14 9.5 14 14 12 14 9.5 12 5 9.5 5" fill="#fff"/></svg>
<svg class="abs" style="left:61.65px;top:69.65px;" width="16.2" height="16.2" viewBox="0 0 24 24"><path d="m12 15.39-3.76 2.27.99-4.28-3.32-2.88 4.38-.37L12 6.09l1.71 4.04 4.38.37-3.32 2.88.99 4.28M22 9.24l-7.19-.61L12 2 9.19 8.63 2 9.24l5.45 4.73L5.82 21 12 17.27 18.18 21l-1.64-7.03z" fill="#1d1d1d"/></svg>
<div class="t" style="left:398.00px;top:73.02px;font-size:9.8px;line-height:11.76px;color:#36364b;letter-spacing:-0.133px;-webkit-text-stroke:0.22px #36364b;">HOME</div>
<div class="t" style="left:466.00px;top:73.02px;font-size:9.8px;line-height:11.76px;color:#36364b;letter-spacing:-0.896px;-webkit-text-stroke:0.22px #36364b;">CVES</div>
<div class="abs" style="left:510px;top:68.8px;width:86.8px;height:19px;background:#1b1b36;border-radius:3px"></div>
<div class="t" style="left:522.60px;top:73.21px;font-size:9.6px;line-height:11.52px;color:#fff;letter-spacing:-0.179px;font-weight:bold;">CARD SHOPS</div>
<div class="t" style="left:619.20px;top:73.02px;font-size:9.8px;line-height:11.76px;color:#36364b;letter-spacing:-0.686px;-webkit-text-stroke:0.22px #36364b;">RIOS</div>
<div class="t" style="left:674.80px;top:73.02px;font-size:9.8px;line-height:11.76px;color:#36364b;letter-spacing:-0.331px;-webkit-text-stroke:0.22px #36364b;">BREACHES</div>
<div class="abs" style="left:891px;top:67px;width:68.5px;height:21px;background:#fb8823;border-radius:3px"></div>
<div class="t" style="left:898.80px;top:72.60px;font-size:9.4px;line-height:11.28px;color:#fff;letter-spacing:0.219px;">Default</div>
<svg class="abs" style="left:933.20px;top:69.90px;" width="16.4" height="16.4" viewBox="0 0 24 24"><path d="M7.41 8.58 12 13.17l4.59-4.59L18 10l-6 6-6-6z" fill="#fff"/></svg>
<svg class="abs" style="left:984.90px;top:70.90px;" width="16" height="16" viewBox="0 0 24 24"><path d="M12 15.5A3.5 3.5 0 0 1 8.5 12 3.5 3.5 0 0 1 12 8.5a3.5 3.5 0 0 1 3.5 3.5 3.5 3.5 0 0 1-3.5 3.5m7.43-2.53c.04-.32.07-.64.07-.97s-.03-.66-.07-1l2.11-1.63c.19-.15.24-.42.12-.64l-2-3.46c-.12-.22-.39-.31-.61-.22l-2.49 1c-.52-.39-1.06-.73-1.69-.98l-.37-2.65A.506.506 0 0 0 14 2h-4c-.25 0-.46.18-.5.42l-.37 2.65c-.63.25-1.17.59-1.69.98l-2.49-1c-.22-.09-.49 0-.61.22l-2 3.46c-.13.22-.07.49.12.64L4.57 11c-.04.34-.07.67-.07 1s.03.65.07.97l-2.11 1.66c-.19.15-.25.42-.12.64l2 3.46c.12.22.39.3.61.22l2.49-1.01c.52.4 1.06.74 1.69.99l.37 2.65c.04.24.25.42.5.42h4c.25 0 .46-.18.5-.42l.37-2.65c.63-.26 1.17-.59 1.69-.99l2.49 1.01c.22.08.49 0 .61-.22l2-3.46c.12-.22.07-.49-.12-.64z" fill="#909090"/></svg>
<div class="t" style="left:83.70px;top:121.49px;font-size:11px;line-height:13.20px;color:#1b1b1b;letter-spacing:-0.202px;font-weight:bold;">Shop Details</div>
<div class="t" style="left:547.70px;top:121.49px;font-size:11px;line-height:13.20px;color:#1b1b1b;letter-spacing:-0.422px;font-weight:bold;">Base Releases</div>
<div class="t" style="left:84.10px;top:353.29px;font-size:11px;line-height:13.20px;color:#1b1b1b;letter-spacing:-0.080px;font-weight:bold;">Location Of Data</div>
<div class="t" style="left:548.00px;top:353.29px;font-size:11px;line-height:13.20px;color:#1b1b1b;letter-spacing:-0.278px;font-weight:bold;">Base Releases Over Time</div>
<svg class="abs" style="left:112.70px;top:154.70px" width="72.00" height="72.00" viewBox="-36.00 -36.00 72.00 72.00"><path d="M0,0 L34.00,-0.00 A34,34 0 0 0 -6.19,-33.43 Z" fill="#1b6ca8" stroke="#fff" stroke-width="0.8" stroke-linejoin="round"/><path d="M0,0 L-6.19,-33.43 A34,34 0 0 0 -33.97,-1.44 Z" fill="#488bc8" stroke="#fff" stroke-width="0.8" stroke-linejoin="round"/><path d="M0,0 L-33.97,-1.44 A34,34 0 0 0 -9.09,32.76 Z" fill="#63a3e1" stroke="#fff" stroke-width="0.8" stroke-linejoin="round"/><path d="M0,0 L-9.09,32.76 A34,34 0 0 0 29.48,16.94 Z" fill="#7bb8f2" stroke="#fff" stroke-width="0.8" stroke-linejoin="round"/><path d="M0,0 L29.48,16.94 A34,34 0 0 0 34.00,0.00 Z" fill="#8ecbfd" stroke="#fff" stroke-width="0.8" stroke-linejoin="round"/></svg>
<svg class="abs" style="left:576.70px;top:154.70px" width="72.00" height="72.00" viewBox="-36.00 -36.00 72.00 72.00"><path d="M0,0 L34.00,-0.00 A34,34 0 1 0 7.51,33.16 Z" fill="#1b6ca8" stroke="#fff" stroke-width="0.8" stroke-linejoin="round"/><path d="M0,0 L7.51,33.16 A34,34 0 0 0 22.15,25.80 Z" fill="#488bc8" stroke="#fff" stroke-width="0.8" stroke-linejoin="round"/><path d="M0,0 L22.15,25.80 A34,34 0 0 0 29.18,17.45 Z" fill="#63a3e1" stroke="#fff" stroke-width="0.8" stroke-linejoin="round"/><path d="M0,0 L29.18,17.45 A34,34 0 0 0 32.82,8.89 Z" fill="#7bb8f2" stroke="#fff" stroke-width="0.8" stroke-linejoin="round"/><path d="M0,0 L32.82,8.89 A34,34 0 0 0 34.00,0.00 Z" fill="#8ecbfd" stroke="#fff" stroke-width="0.8" stroke-linejoin="round"/></svg>
<div class="abs" style="left:123.60px;top:237.00px;width:10.2px;height:10.2px;border-radius:50%;background:#1b6ca8"></div>
<div class="t" style="left:137.10px;top:237.06px;font-size:8.6px;line-height:10.32px;color:#f4832c;letter-spacing:-0.410px;text-decoration:underline;">Joker's St</div>
<div class="t" style="left:171.10px;top:237.06px;font-size:8.6px;line-height:10.32px;color:#888;letter-spacing:-0.784px;">...</div>
<div class="abs" style="left:123.60px;top:253.27px;width:10.2px;height:10.2px;border-radius:50%;background:#488bc8"></div>
<div class="t" style="left:137.10px;top:253.33px;font-size:8.6px;line-height:10.32px;color:#f4832c;letter-spacing:0.115px;text-decoration:underline;">Iprofit</div>
<div class="abs" style="left:123.60px;top:269.54px;width:10.2px;height:10.2px;border-radius:50%;background:#63a3e1"></div>
<div class="t" style="left:137.10px;top:269.60px;font-size:8.6px;line-height:10.32px;color:#f4832c;letter-spacing:-0.381px;text-decoration:underline;">Swiped</div>
<div class="abs" style="left:123.60px;top:285.81px;width:10.2px;height:10.2px;border-radius:50%;background:#7bb8f2"></div>
<div class="t" style="left:137.10px;top:285.87px;font-size:8.6px;line-height:10.32px;color:#f4832c;letter-spacing:-0.315px;text-decoration:underline;">Carder Pl</div>
<div class="t" style="left:171.10px;top:285.87px;font-size:8.6px;line-height:10.32px;color:#888;letter-spacing:-0.784px;">...</div>
<div class="abs" style="left:123.60px;top:302.08px;width:10.2px;height:10.2px;border-radius:50%;background:#8ecbfd"></div>
<div class="t" style="left:137.10px;top:302.14px;font-size:8.6px;line-height:10.32px;color:#f4832c;letter-spacing:-0.296px;text-decoration:underline;">Card Mafia</div>
<div class="abs" style="left:587.60px;top:237.00px;width:10.2px;height:10.2px;border-radius:50%;background:#1b6ca8"></div>
<div class="t" style="left:601.10px;top:237.06px;font-size:8.6px;line-height:10.32px;color:#f4832c;letter-spacing:-0.191px;text-decoration:underline;">N/a</div>
<div class="abs" style="left:587.60px;top:253.27px;width:10.2px;height:10.2px;border-radius:50%;background:#488bc8"></div>
<div class="t" style="left:601.10px;top:253.33px;font-size:8.6px;line-height:10.32px;color:#f4832c;letter-spacing:-0.087px;text-decoration:underline;">new-worl</div>
<div class="t" style="left:635.10px;top:253.33px;font-size:8.6px;line-height:10.32px;color:#888;letter-spacing:-0.784px;">...</div>
<div class="abs" style="left:587.60px;top:269.54px;width:10.2px;height:10.2px;border-radius:50%;background:#63a3e1"></div>
<div class="t" style="left:601.10px;top:269.60px;font-size:8.6px;line-height:10.32px;color:#f4832c;letter-spacing:-0.207px;text-decoration:underline;">lotus-49-</div>
<div class="t" style="left:633.10px;top:269.60px;font-size:8.6px;line-height:10.32px;color:#888;letter-spacing:-0.784px;">...</div>
<div class="abs" style="left:587.60px;top:285.81px;width:10.2px;height:10.2px;border-radius:50%;background:#7bb8f2"></div>
<div class="t" style="left:601.10px;top:285.87px;font-size:8.6px;line-height:10.32px;color:#f4832c;letter-spacing:-0.087px;text-decoration:underline;">new-worl</div>
<div class="t" style="left:635.10px;top:285.87px;font-size:8.6px;line-height:10.32px;color:#888;letter-spacing:-0.784px;">...</div>
<div class="abs" style="left:587.60px;top:302.08px;width:10.2px;height:10.2px;border-radius:50%;background:#8ecbfd"></div>
<div class="t" style="left:601.10px;top:302.14px;font-size:8.6px;line-height:10.32px;color:#f4832c;letter-spacing:-0.087px;text-decoration:underline;">new-worl</div>
<div class="t" style="left:635.10px;top:302.14px;font-size:8.6px;line-height:10.32px;color:#888;letter-spacing:-0.784px;">...</div>
<div class="t" style="left:231.50px;top:156.68px;font-size:9px;line-height:10.80px;color:#8c8c8c;letter-spacing:0.632px;-webkit-text-stroke:0.2px #8c8c8c;">NAME</div>
<div class="t" style="left:462.40px;top:156.68px;font-size:9px;line-height:10.80px;color:#8c8c8c;letter-spacing:0.251px;-webkit-text-stroke:0.2px #8c8c8c;">COUNT</div>
<div class="hl" style="left:214px;top:175.90px;width:300px"></div>
<div class="t" style="left:231.40px;top:180.31px;font-size:9.6px;line-height:11.52px;color:#333;letter-spacing:-0.063px;">joker's stash</div>
<div class="t" style="left:455.10px;top:180.31px;font-size:9.6px;line-height:11.52px;color:#333;letter-spacing:-0.212px;">6,705,110</div>
<div class="hl" style="left:214px;top:194.60px;width:300px"></div>
<div class="t" style="left:231.40px;top:199.01px;font-size:9.6px;line-height:11.52px;color:#333;letter-spacing:0.371px;">iprofit</div>
<div class="t" style="left:455.10px;top:199.01px;font-size:9.6px;line-height:11.52px;color:#333;letter-spacing:-0.301px;">5,143,059</div>
<div class="hl" style="left:214px;top:213.30px;width:300px"></div>
<div class="t" style="left:231.40px;top:217.71px;font-size:9.6px;line-height:11.52px;color:#333;letter-spacing:-0.037px;">swiped</div>
<div class="t" style="left:455.10px;top:217.71px;font-size:9.6px;line-height:11.52px;color:#333;letter-spacing:-0.301px;">5,132,400</div>
<div class="hl" style="left:214px;top:232.00px;width:300px"></div>
<div class="t" style="left:231.40px;top:236.41px;font-size:9.6px;line-height:11.52px;color:#333;letter-spacing:0.039px;">carder planet</div>
<div class="t" style="left:455.10px;top:236.41px;font-size:9.6px;line-height:11.52px;color:#333;letter-spacing:-0.301px;">5,045,461</div>
<div class="hl" style="left:214px;top:250.70px;width:300px"></div>
<div class="t" style="left:231.40px;top:255.11px;font-size:9.6px;line-height:11.52px;color:#333;letter-spacing:-0.046px;">card mafia</div>
<div class="t" style="left:455.10px;top:255.11px;font-size:9.6px;line-height:11.52px;color:#333;letter-spacing:-0.301px;">1,993,549</div>
<div class="t" style="left:217.80px;top:281.27px;font-size:10.6px;line-height:12.72px;color:#333;width:94.8px;"><b>1 - 5</b> of <b>52</b> (52 Total)</div>
<div class="t" style="left:395.00px;top:281.27px;font-size:10.6px;line-height:12.72px;color:#a8a8a8;letter-spacing:0.614px;">&lt; <span style="color:#e3e3e3">1</span> 2 3 4 5 ... 10 11 &gt;</div>
<div class="t" style="left:695.50px;top:156.68px;font-size:9px;line-height:10.80px;color:#8c8c8c;letter-spacing:0.632px;-webkit-text-stroke:0.2px #8c8c8c;">NAME</div>
<div class="t" style="left:926.40px;top:156.68px;font-size:9px;line-height:10.80px;color:#8c8c8c;letter-spacing:0.251px;-webkit-text-stroke:0.2px #8c8c8c;">COUNT</div>
<div class="hl" style="left:678px;top:175.90px;width:300px"></div>
<div class="abs" style="left:695.4px;top:177.40px;width:197.6px;height:17px;overflow:hidden"><div class="t" style="left:0.00px;top:2.91px;font-size:9.6px;line-height:11.52px;color:#333;letter-spacing:0.327px;">n/a</div>
</div>
<div class="t" style="left:919.10px;top:180.31px;font-size:9.6px;line-height:11.52px;color:#333;letter-spacing:-0.301px;">5,448,265</div>
<div class="hl" style="left:678px;top:194.60px;width:300px"></div>
<div class="abs" style="left:695.4px;top:196.10px;width:197.6px;height:17px;overflow:hidden"><div class="t" style="left:0.00px;top:2.91px;font-size:9.6px;line-height:11.52px;color:#333;letter-spacing:-0.001px;">new-world-order-145-us-discount (nwo breach)</div>
</div>
<div class="t" style="left:924.90px;top:199.01px;font-size:9.6px;line-height:11.52px;color:#333;letter-spacing:-0.034px;">537,265</div>
<div class="hl" style="left:678px;top:213.30px;width:300px"></div>
<div class="abs" style="left:695.4px;top:214.80px;width:197.6px;height:17px;overflow:hidden"><div class="t" style="left:0.00px;top:2.91px;font-size:9.6px;line-height:11.52px;color:#333;letter-spacing:-0.055px;">lotus-49-us (nirvana breach) : usa by state/city/zip</div>
</div>
<div class="t" style="left:924.90px;top:217.71px;font-size:9.6px;line-height:11.52px;color:#333;letter-spacing:0.085px;">356,110</div>
<div class="hl" style="left:678px;top:232.00px;width:300px"></div>
<div class="abs" style="left:695.4px;top:233.50px;width:197.6px;height:17px;overflow:hidden"><div class="t" style="left:0.00px;top:2.91px;font-size:9.6px;line-height:11.52px;color:#333;letter-spacing:-0.001px;">new-world-order-146-us-discount (nwo breach)</div>
</div>
<div class="t" style="left:924.90px;top:236.41px;font-size:9.6px;line-height:11.52px;color:#333;letter-spacing:-0.034px;">302,761</div>
<div class="hl" style="left:678px;top:250.70px;width:300px"></div>
<div class="abs" style="left:695.4px;top:252.20px;width:197.6px;height:17px;overflow:hidden"><div class="t" style="left:0.00px;top:2.91px;font-size:9.6px;line-height:11.52px;color:#333;letter-spacing:-0.001px;">new-world-order-147-us-discount (nwo breach)</div>
</div>
<div class="t" style="left:924.90px;top:255.11px;font-size:9.6px;line-height:11.52px;color:#333;letter-spacing:0.085px;">292,112</div>
<div class="t" style="left:681.80px;top:281.27px;font-size:10.6px;line-height:12.72px;color:#333;width:115.5px;"><b>1 - 5</b> of <b>100</b> (7,349 Total)</div>
<div class="t" style="left:859.30px;top:281.27px;font-size:10.6px;line-height:12.72px;color:#a8a8a8;letter-spacing:0.565px;">&lt; <span style="color:#e3e3e3">1</span> 2 3 4 5 ... 19 20 &gt;</div>
<svg class="abs" style="left:537px;top:341px" width="453" height="254" viewBox="537 341 453 254"><rect x="583.10" y="472.6" width="9.6" height="127.4" fill="#1b6ca8"/><rect x="595.91" y="479.3" width="9.6" height="120.7" fill="#1b6ca8"/><rect x="608.71" y="456.7" width="9.6" height="143.3" fill="#1b6ca8"/><rect x="621.52" y="480.0" width="9.6" height="120.0" fill="#1b6ca8"/><rect x="634.33" y="390.9" width="9.6" height="209.1" fill="#1b6ca8"/><rect x="647.13" y="423.4" width="9.6" height="176.6" fill="#1b6ca8"/><rect x="659.94" y="460.0" width="9.6" height="140.0" fill="#1b6ca8"/><rect x="672.75" y="471.1" width="9.6" height="128.9" fill="#1b6ca8"/><rect x="685.56" y="509.6" width="9.6" height="90.4" fill="#1b6ca8"/><rect x="698.36" y="494.8" width="9.6" height="105.2" fill="#1b6ca8"/><rect x="711.17" y="468.5" width="9.6" height="131.5" fill="#1b6ca8"/><rect x="723.98" y="448.9" width="9.6" height="151.1" fill="#1b6ca8"/><rect x="736.78" y="452.3" width="9.6" height="147.7" fill="#1b6ca8"/><rect x="749.59" y="500.7" width="9.6" height="99.3" fill="#1b6ca8"/><rect x="762.40" y="511.4" width="9.6" height="88.6" fill="#1b6ca8"/><rect x="775.21" y="509.9" width="9.6" height="90.1" fill="#1b6ca8"/><rect x="788.01" y="501.4" width="9.6" height="98.6" fill="#1b6ca8"/><rect x="800.82" y="508.1" width="9.6" height="91.9" fill="#1b6ca8"/><rect x="813.63" y="509.9" width="9.6" height="90.1" fill="#1b6ca8"/><rect x="826.43" y="512.2" width="9.6" height="87.8" fill="#1b6ca8"/><rect x="839.24" y="515.5" width="9.6" height="84.5" fill="#1b6ca8"/><rect x="852.05" y="497.7" width="9.6" height="102.3" fill="#1b6ca8"/><rect x="864.85" y="532.5" width="9.6" height="67.5" fill="#1b6ca8"/><rect x="877.66" y="528.4" width="9.6" height="71.6" fill="#1b6ca8"/><rect x="890.47" y="498.1" width="9.6" height="101.9" fill="#1b6ca8"/><rect x="903.28" y="504.8" width="9.6" height="95.2" fill="#1b6ca8"/><rect x="916.08" y="500.3" width="9.6" height="99.7" fill="#1b6ca8"/><rect x="928.89" y="522.5" width="9.6" height="77.5" fill="#1b6ca8"/><rect x="941.70" y="517.7" width="9.6" height="82.3" fill="#1b6ca8"/><rect x="954.50" y="525.1" width="9.6" height="74.9" fill="#1b6ca8"/><path d="M577.8 379.9 H582 V600 M577.8 448.3 H582 M577.8 516.8 H582 M577.8 585.3 H582" stroke="#858585" stroke-width="0.9" fill="none"/></svg>
<div class="t" style="left:561.43px;top:381.95px;font-size:10.2px;line-height:12.24px;color:#bbbfcc;">2M</div>
<div class="t" style="left:561.43px;top:442.25px;font-size:10.2px;line-height:12.24px;color:#bbbfcc;">1M</div>
<div class="t" style="left:553.48px;top:510.75px;font-size:10.2px;line-height:12.24px;color:#bbbfcc;">900k</div>
<div class="t" style="left:553.48px;top:579.25px;font-size:10.2px;line-height:12.24px;color:#bbbfcc;">450k</div>
<div class="abs" style="left:965.9px;top:550.4px;width:37.4px;height:37.4px;border-radius:50%;background:#fb8823;box-shadow:0 1px 3px rgba(0,0,0,.2)"></div>
<svg class="abs" style="left:979.8px;top:554.6px" width="10" height="29" viewBox="0 0 160 448" preserveAspectRatio="none"><path d="M77,0 C70,60 0,170 0,270 C0,360 40,420 77,448 C120,420 162,350 158,250 C155,180 120,110 100,80 C92,55 82,25 77,0 Z M128,128 C115,160 100,200 85,240 C65,290 54,330 57,365 C60,395 70,412 77,422 C90,405 106,375 108,340 C109,310 99,290 101,258 C103,225 116,180 131,140 Z" fill="#fff" fill-rule="evenodd"/></svg>
<div class="abs" style="left:959.5px;top:543.3px;width:20.2px;height:20.2px;border-radius:50%;background:#1b1b36"></div>
<div class="t" style="left:966.55px;top:547.17px;font-size:10.6px;line-height:12.72px;color:#fff;-webkit-text-stroke:0.25px #fff;">2</div>
</div>
</body>
</html>
